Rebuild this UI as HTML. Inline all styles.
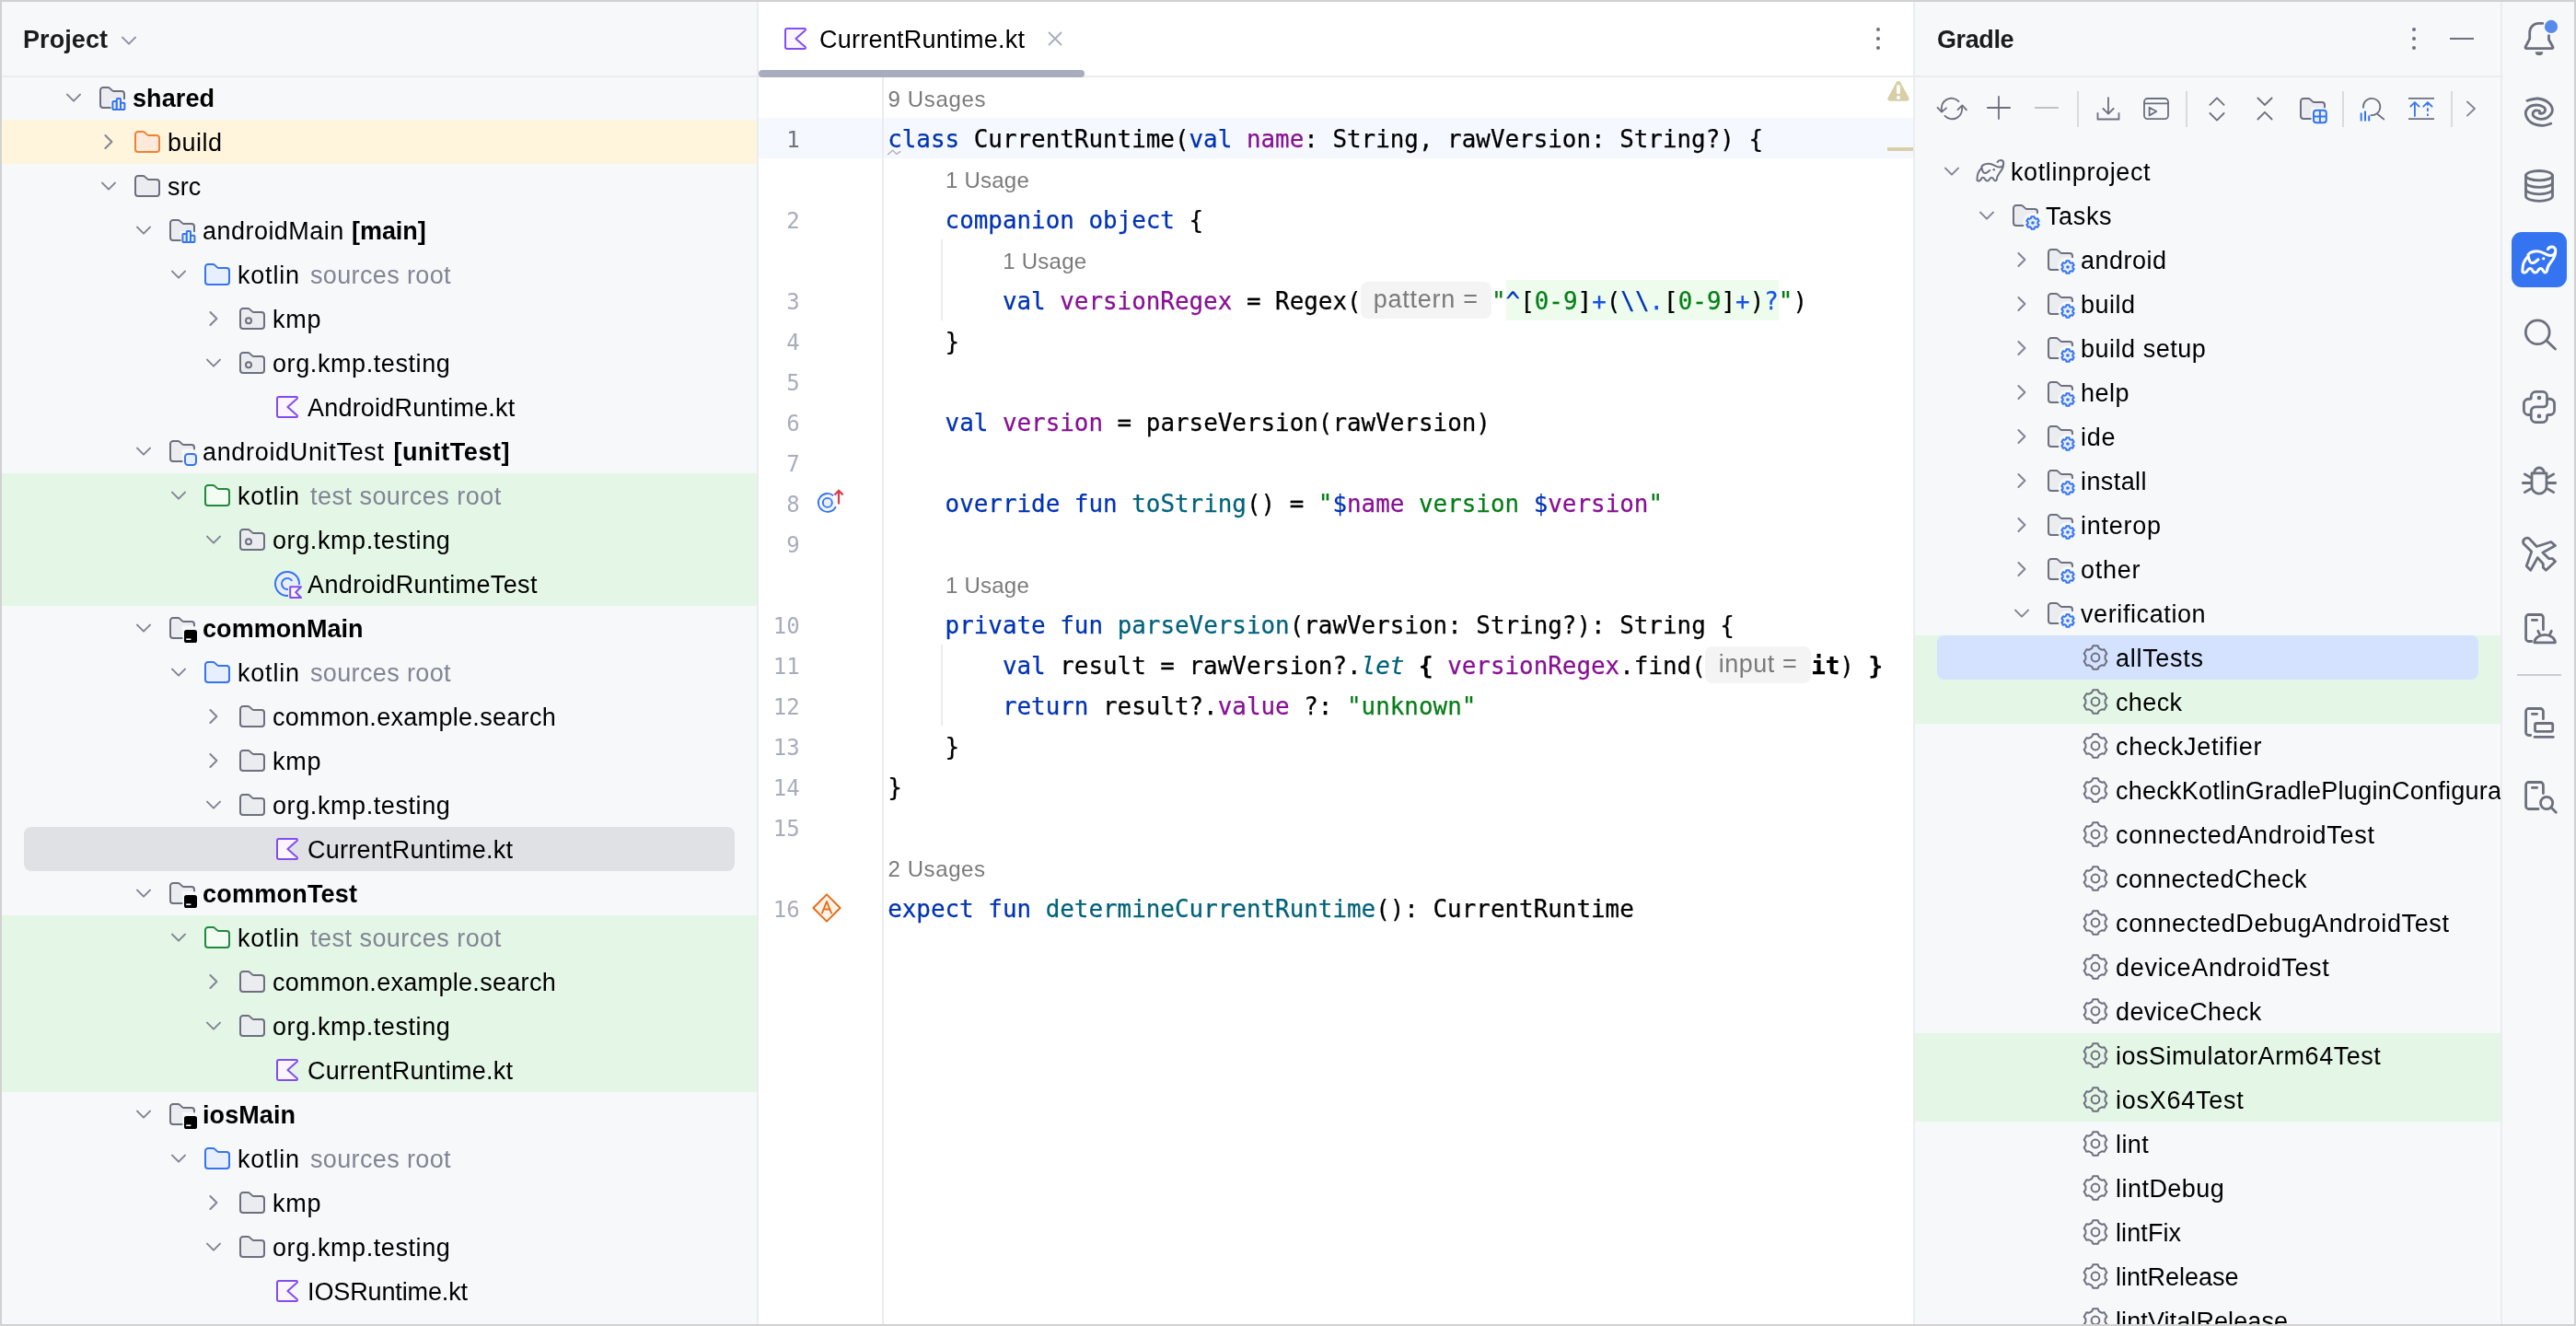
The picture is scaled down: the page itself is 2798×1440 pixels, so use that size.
<!DOCTYPE html>
<html lang="en"><head><meta charset="utf-8"><title>CurrentRuntime.kt</title>
<style>
html,body{margin:0;padding:0}
body{width:2798px;height:1440px;position:relative;overflow:hidden;background:#f7f8fa;
font-family:"Liberation Sans", sans-serif;font-size:27px;color:#000}
.abs{position:absolute}
.t{position:absolute;white-space:pre;display:block}
.b{font-weight:bold}
.g{color:#818594}
.hdr{font-weight:bold;font-size:27px;color:#1c1c1e}
.hint{font-size:24px;color:#7a7a7a}
.code{font-family:"DejaVu Sans Mono", "Liberation Mono", monospace;font-size:25.9px;-webkit-text-stroke:.25px currentColor}
.ln{font-family:"DejaVu Sans Mono", "Liberation Mono", monospace;font-size:24px;color:#a8adbd;text-align:right}
.i{font-style:italic}
.inl{position:absolute;left:-.6px;top:1px;height:40px;line-height:39.6px;right:.4px;text-align:center;background:#f4f4f4;border-radius:8px;
font-family:"Liberation Sans", sans-serif;font-size:27px;color:#7a7a7a;white-space:pre;-webkit-text-stroke:0;font-weight:normal;font-style:normal}
.kw{color:#0033b3}.fn{color:#00627a}.pr{color:#871094}.st{color:#067d17}.rx{color:#1750eb}
</style></head><body><div id="root" style="position:absolute;left:0;top:0;width:2798px;height:1440px;will-change:transform">

<div class="abs" style="left:824px;top:0;width:1254px;height:1440px;background:#fff"></div>
<div class="abs" style="left:2px;top:130px;width:820px;height:48px;background:#fff4dc"></div>
<div class="abs" style="left:2px;top:514px;width:820px;height:144px;background:#e4f6e6"></div>
<div class="abs" style="left:2px;top:994px;width:820px;height:192px;background:#e4f6e6"></div>
<div class="abs" style="left:26px;top:898px;width:772px;height:48px;background:#dfe1e5;border-radius:8px"></div>
<svg style="position:absolute;left:70px;top:96px" width="20" height="20" viewBox="-10 -10 20 20" fill="none"><path d="M-7 -3.4L0 3.6L7 -3.4" stroke="#818594" stroke-width="2" stroke-linecap="round" stroke-linejoin="round"/></svg><svg style="position:absolute;left:106px;top:90px" width="32" height="32" viewBox="0 0 16 16" fill="none" ><path d="M6.9 13.5H3A1.5 1.5 0 0 1 1.5 12V4A1.5 1.5 0 0 1 3 2.5H5.6C6 2.5 6.37 2.66 6.65 2.94L7.85 4.06C8.04 4.25 8.3 4.45 8.56 4.45H13A1.5 1.5 0 0 1 14.5 5.95V8.6H6.9Z" fill="#ebecf0"/><path d="M6.9 13.5H3A1.5 1.5 0 0 1 1.5 12V4A1.5 1.5 0 0 1 3 2.5H5.6C6 2.5 6.37 2.66 6.65 2.94L7.85 4.06C8.04 4.25 8.3 4.45 8.56 4.45H13A1.5 1.5 0 0 1 14.5 5.95V8.6" stroke="#6c707e" stroke-linecap="round"/><rect x="8.2" y="10" width="2.2" height="4.5" rx=".4" fill="#e7effd" stroke="#3574f0"/><rect x="10.4" y="8.5" width="2.1" height="6" rx=".4" fill="#e7effd" stroke="#3574f0"/><rect x="12.5" y="10.9" width="2.2" height="3.6" rx=".4" fill="#e7effd" stroke="#3574f0"/></svg><span class="t b" style="left:144px;top:83px;height:48px;line-height:48px;letter-spacing:0.090px;">shared</span>
<svg style="position:absolute;left:107.5px;top:144px" width="20" height="20" viewBox="-10 -10 20 20" fill="none"><path d="M-3.6 -7L3.4 0L-3.6 7" stroke="#818594" stroke-width="2" stroke-linecap="round" stroke-linejoin="round"/></svg><svg style="position:absolute;left:144px;top:138px" width="32" height="32" viewBox="0 0 16 16" fill="none" ><path d="M1.5 4A1.5 1.5 0 0 1 3 2.5H5.6C6 2.5 6.37 2.66 6.65 2.94L7.85 4.06C8.04 4.25 8.3 4.45 8.56 4.45H13A1.5 1.5 0 0 1 14.5 5.95V12A1.5 1.5 0 0 1 13 13.5H3A1.5 1.5 0 0 1 1.5 12Z" fill="#ffe9db" stroke="#ee8232"/></svg><span class="t " style="left:182px;top:131px;height:48px;line-height:48px;letter-spacing:0.493px;">build</span>
<svg style="position:absolute;left:108px;top:192px" width="20" height="20" viewBox="-10 -10 20 20" fill="none"><path d="M-7 -3.4L0 3.6L7 -3.4" stroke="#818594" stroke-width="2" stroke-linecap="round" stroke-linejoin="round"/></svg><svg style="position:absolute;left:144px;top:186px" width="32" height="32" viewBox="0 0 16 16" fill="none" ><path d="M1.5 4A1.5 1.5 0 0 1 3 2.5H5.6C6 2.5 6.37 2.66 6.65 2.94L7.85 4.06C8.04 4.25 8.3 4.45 8.56 4.45H13A1.5 1.5 0 0 1 14.5 5.95V12A1.5 1.5 0 0 1 13 13.5H3A1.5 1.5 0 0 1 1.5 12Z" fill="#ebecf0" stroke="#6c707e"/></svg><span class="t " style="left:182px;top:179px;height:48px;line-height:48px;letter-spacing:0.129px;">src</span>
<svg style="position:absolute;left:146px;top:240px" width="20" height="20" viewBox="-10 -10 20 20" fill="none"><path d="M-7 -3.4L0 3.6L7 -3.4" stroke="#818594" stroke-width="2" stroke-linecap="round" stroke-linejoin="round"/></svg><svg style="position:absolute;left:182px;top:234px" width="32" height="32" viewBox="0 0 16 16" fill="none" ><path d="M6.9 13.5H3A1.5 1.5 0 0 1 1.5 12V4A1.5 1.5 0 0 1 3 2.5H5.6C6 2.5 6.37 2.66 6.65 2.94L7.85 4.06C8.04 4.25 8.3 4.45 8.56 4.45H13A1.5 1.5 0 0 1 14.5 5.95V8.6H6.9Z" fill="#ebecf0"/><path d="M6.9 13.5H3A1.5 1.5 0 0 1 1.5 12V4A1.5 1.5 0 0 1 3 2.5H5.6C6 2.5 6.37 2.66 6.65 2.94L7.85 4.06C8.04 4.25 8.3 4.45 8.56 4.45H13A1.5 1.5 0 0 1 14.5 5.95V8.6" stroke="#6c707e" stroke-linecap="round"/><rect x="8.2" y="10" width="2.2" height="4.5" rx=".4" fill="#e7effd" stroke="#3574f0"/><rect x="10.4" y="8.5" width="2.1" height="6" rx=".4" fill="#e7effd" stroke="#3574f0"/><rect x="12.5" y="10.9" width="2.2" height="3.6" rx=".4" fill="#e7effd" stroke="#3574f0"/></svg><span class="t " style="left:220px;top:227px;height:48px;line-height:48px;letter-spacing:0.467px;">androidMain</span><span class="t b" style="left:382px;top:227px;height:48px;line-height:48px;letter-spacing:-0.052px;">[main]</span>
<svg style="position:absolute;left:184px;top:288px" width="20" height="20" viewBox="-10 -10 20 20" fill="none"><path d="M-7 -3.4L0 3.6L7 -3.4" stroke="#818594" stroke-width="2" stroke-linecap="round" stroke-linejoin="round"/></svg><svg style="position:absolute;left:220px;top:282px" width="32" height="32" viewBox="0 0 16 16" fill="none" ><path d="M1.5 4A1.5 1.5 0 0 1 3 2.5H5.6C6 2.5 6.37 2.66 6.65 2.94L7.85 4.06C8.04 4.25 8.3 4.45 8.56 4.45H13A1.5 1.5 0 0 1 14.5 5.95V12A1.5 1.5 0 0 1 13 13.5H3A1.5 1.5 0 0 1 1.5 12Z" fill="#e7effd" stroke="#3574f0"/></svg><span class="t " style="left:258px;top:275px;height:48px;line-height:48px;letter-spacing:0.797px;">kotlin</span><span class="t g" style="left:337px;top:275px;height:48px;line-height:48px;letter-spacing:0.358px;">sources root</span>
<svg style="position:absolute;left:221.5px;top:336px" width="20" height="20" viewBox="-10 -10 20 20" fill="none"><path d="M-3.6 -7L3.4 0L-3.6 7" stroke="#818594" stroke-width="2" stroke-linecap="round" stroke-linejoin="round"/></svg><svg style="position:absolute;left:258px;top:330px" width="32" height="32" viewBox="0 0 16 16" fill="none" ><path d="M1.5 4A1.5 1.5 0 0 1 3 2.5H5.6C6 2.5 6.37 2.66 6.65 2.94L7.85 4.06C8.04 4.25 8.3 4.45 8.56 4.45H13A1.5 1.5 0 0 1 14.5 5.95V12A1.5 1.5 0 0 1 13 13.5H3A1.5 1.5 0 0 1 1.5 12Z" fill="#ebecf0" stroke="#6c707e"/><circle cx="6" cy="9.1" r="1.5" stroke="#6c707e" fill="none"/></svg><span class="t " style="left:296px;top:323px;height:48px;line-height:48px;letter-spacing:0.754px;">kmp</span>
<svg style="position:absolute;left:222px;top:384px" width="20" height="20" viewBox="-10 -10 20 20" fill="none"><path d="M-7 -3.4L0 3.6L7 -3.4" stroke="#818594" stroke-width="2" stroke-linecap="round" stroke-linejoin="round"/></svg><svg style="position:absolute;left:258px;top:378px" width="32" height="32" viewBox="0 0 16 16" fill="none" ><path d="M1.5 4A1.5 1.5 0 0 1 3 2.5H5.6C6 2.5 6.37 2.66 6.65 2.94L7.85 4.06C8.04 4.25 8.3 4.45 8.56 4.45H13A1.5 1.5 0 0 1 14.5 5.95V12A1.5 1.5 0 0 1 13 13.5H3A1.5 1.5 0 0 1 1.5 12Z" fill="#ebecf0" stroke="#6c707e"/><circle cx="6" cy="9.1" r="1.5" stroke="#6c707e" fill="none"/></svg><span class="t " style="left:296px;top:371px;height:48px;line-height:48px;letter-spacing:0.588px;">org.kmp.testing</span>
<svg style="position:absolute;left:296px;top:426px" width="32" height="32" viewBox="0 0 16 16" fill="none" ><path d="M3.5 2.5H12.9a.6.6 0 0 1 .42 1.02L8.2 8l5.12 4.48a.6.6 0 0 1-.42 1.02H3.5a1 1 0 0 1-1-1v-9a1 1 0 0 1 1-1z" fill="#faf5ff" stroke="#834df0" stroke-linejoin="round"/></svg><span class="t " style="left:334px;top:419px;height:48px;line-height:48px;letter-spacing:0.197px;">AndroidRuntime.kt</span>
<svg style="position:absolute;left:146px;top:480px" width="20" height="20" viewBox="-10 -10 20 20" fill="none"><path d="M-7 -3.4L0 3.6L7 -3.4" stroke="#818594" stroke-width="2" stroke-linecap="round" stroke-linejoin="round"/></svg><svg style="position:absolute;left:182px;top:474px" width="32" height="32" viewBox="0 0 16 16" fill="none" ><path d="M7.8 13.5H3A1.5 1.5 0 0 1 1.5 12V4A1.5 1.5 0 0 1 3 2.5H5.6C6 2.5 6.37 2.66 6.65 2.94L7.85 4.06C8.04 4.25 8.3 4.45 8.56 4.45H13A1.5 1.5 0 0 1 14.5 5.95V6.8H7.8Z" fill="#ebecf0"/><path d="M7.8 13.5H3A1.5 1.5 0 0 1 1.5 12V4A1.5 1.5 0 0 1 3 2.5H5.6C6 2.5 6.37 2.66 6.65 2.94L7.85 4.06C8.04 4.25 8.3 4.45 8.56 4.45H13A1.5 1.5 0 0 1 14.5 5.95V6.8" stroke="#6c707e" stroke-linecap="round"/><rect x="9.5" y="9.5" width="6" height="6" rx="1.6" fill="#e7effd" stroke="#3574f0"/></svg><span class="t " style="left:220px;top:467px;height:48px;line-height:48px;letter-spacing:0.671px;">androidUnitTest</span><span class="t b" style="left:427.5px;top:467px;height:48px;line-height:48px;letter-spacing:0.558px;">[unitTest]</span>
<svg style="position:absolute;left:184px;top:528px" width="20" height="20" viewBox="-10 -10 20 20" fill="none"><path d="M-7 -3.4L0 3.6L7 -3.4" stroke="#818594" stroke-width="2" stroke-linecap="round" stroke-linejoin="round"/></svg><svg style="position:absolute;left:220px;top:522px" width="32" height="32" viewBox="0 0 16 16" fill="none" ><path d="M1.5 4A1.5 1.5 0 0 1 3 2.5H5.6C6 2.5 6.37 2.66 6.65 2.94L7.85 4.06C8.04 4.25 8.3 4.45 8.56 4.45H13A1.5 1.5 0 0 1 14.5 5.95V12A1.5 1.5 0 0 1 13 13.5H3A1.5 1.5 0 0 1 1.5 12Z" fill="#f2fcf3" stroke="#208a3c"/></svg><span class="t " style="left:258px;top:515px;height:48px;line-height:48px;letter-spacing:0.797px;">kotlin</span><span class="t g" style="left:337px;top:515px;height:48px;line-height:48px;letter-spacing:0.476px;">test sources root</span>
<svg style="position:absolute;left:222px;top:576px" width="20" height="20" viewBox="-10 -10 20 20" fill="none"><path d="M-7 -3.4L0 3.6L7 -3.4" stroke="#818594" stroke-width="2" stroke-linecap="round" stroke-linejoin="round"/></svg><svg style="position:absolute;left:258px;top:570px" width="32" height="32" viewBox="0 0 16 16" fill="none" ><path d="M1.5 4A1.5 1.5 0 0 1 3 2.5H5.6C6 2.5 6.37 2.66 6.65 2.94L7.85 4.06C8.04 4.25 8.3 4.45 8.56 4.45H13A1.5 1.5 0 0 1 14.5 5.95V12A1.5 1.5 0 0 1 13 13.5H3A1.5 1.5 0 0 1 1.5 12Z" fill="#ebecf0" stroke="#6c707e"/><circle cx="6" cy="9.1" r="1.5" stroke="#6c707e" fill="none"/></svg><span class="t " style="left:296px;top:563px;height:48px;line-height:48px;letter-spacing:0.588px;">org.kmp.testing</span>
<svg style="position:absolute;left:296px;top:618px" width="32" height="32" viewBox="0 0 16 16" fill="none" ><circle cx="8" cy="8" r="6.5" fill="#e7effd" stroke="#3574f0"/><path d="M10.6 6.4A3 3 0 1 0 9 10.8" stroke="#3574f0" fill="none"/><rect x="8.5" y="8.5" width="8" height="8" fill="#e4f6e6"/><path d="M9.6 9.6H15.5L12.6 12.6L15.5 15.5H9.6Z" fill="#faf5ff" stroke="#834df0" stroke-linejoin="round"/></svg><span class="t " style="left:334px;top:611px;height:48px;line-height:48px;letter-spacing:0.375px;">AndroidRuntimeTest</span>
<svg style="position:absolute;left:146px;top:672px" width="20" height="20" viewBox="-10 -10 20 20" fill="none"><path d="M-7 -3.4L0 3.6L7 -3.4" stroke="#818594" stroke-width="2" stroke-linecap="round" stroke-linejoin="round"/></svg><svg style="position:absolute;left:182px;top:666px" width="32" height="32" viewBox="0 0 16 16" fill="none" ><path d="M7.8 13.5H3A1.5 1.5 0 0 1 1.5 12V4A1.5 1.5 0 0 1 3 2.5H5.6C6 2.5 6.37 2.66 6.65 2.94L7.85 4.06C8.04 4.25 8.3 4.45 8.56 4.45H13A1.5 1.5 0 0 1 14.5 5.95V6.8H7.8Z" fill="#ebecf0"/><path d="M7.8 13.5H3A1.5 1.5 0 0 1 1.5 12V4A1.5 1.5 0 0 1 3 2.5H5.6C6 2.5 6.37 2.66 6.65 2.94L7.85 4.06C8.04 4.25 8.3 4.45 8.56 4.45H13A1.5 1.5 0 0 1 14.5 5.95V6.8" stroke="#6c707e" stroke-linecap="round"/><rect x="9" y="9" width="7" height="7" rx="1.3" fill="#000"/><rect x="10.1" y="13.7" width="2.6" height=".8" fill="#fff"/></svg><span class="t b" style="left:220px;top:659px;height:48px;line-height:48px;letter-spacing:0.065px;">commonMain</span>
<svg style="position:absolute;left:184px;top:720px" width="20" height="20" viewBox="-10 -10 20 20" fill="none"><path d="M-7 -3.4L0 3.6L7 -3.4" stroke="#818594" stroke-width="2" stroke-linecap="round" stroke-linejoin="round"/></svg><svg style="position:absolute;left:220px;top:714px" width="32" height="32" viewBox="0 0 16 16" fill="none" ><path d="M1.5 4A1.5 1.5 0 0 1 3 2.5H5.6C6 2.5 6.37 2.66 6.65 2.94L7.85 4.06C8.04 4.25 8.3 4.45 8.56 4.45H13A1.5 1.5 0 0 1 14.5 5.95V12A1.5 1.5 0 0 1 13 13.5H3A1.5 1.5 0 0 1 1.5 12Z" fill="#e7effd" stroke="#3574f0"/></svg><span class="t " style="left:258px;top:707px;height:48px;line-height:48px;letter-spacing:0.797px;">kotlin</span><span class="t g" style="left:337px;top:707px;height:48px;line-height:48px;letter-spacing:0.358px;">sources root</span>
<svg style="position:absolute;left:221.5px;top:768px" width="20" height="20" viewBox="-10 -10 20 20" fill="none"><path d="M-3.6 -7L3.4 0L-3.6 7" stroke="#818594" stroke-width="2" stroke-linecap="round" stroke-linejoin="round"/></svg><svg style="position:absolute;left:258px;top:762px" width="32" height="32" viewBox="0 0 16 16" fill="none" ><path d="M1.5 4A1.5 1.5 0 0 1 3 2.5H5.6C6 2.5 6.37 2.66 6.65 2.94L7.85 4.06C8.04 4.25 8.3 4.45 8.56 4.45H13A1.5 1.5 0 0 1 14.5 5.95V12A1.5 1.5 0 0 1 13 13.5H3A1.5 1.5 0 0 1 1.5 12Z" fill="#ebecf0" stroke="#6c707e"/></svg><span class="t " style="left:296px;top:755px;height:48px;line-height:48px;letter-spacing:0.304px;">common.example.search</span>
<svg style="position:absolute;left:221.5px;top:816px" width="20" height="20" viewBox="-10 -10 20 20" fill="none"><path d="M-3.6 -7L3.4 0L-3.6 7" stroke="#818594" stroke-width="2" stroke-linecap="round" stroke-linejoin="round"/></svg><svg style="position:absolute;left:258px;top:810px" width="32" height="32" viewBox="0 0 16 16" fill="none" ><path d="M1.5 4A1.5 1.5 0 0 1 3 2.5H5.6C6 2.5 6.37 2.66 6.65 2.94L7.85 4.06C8.04 4.25 8.3 4.45 8.56 4.45H13A1.5 1.5 0 0 1 14.5 5.95V12A1.5 1.5 0 0 1 13 13.5H3A1.5 1.5 0 0 1 1.5 12Z" fill="#ebecf0" stroke="#6c707e"/></svg><span class="t " style="left:296px;top:803px;height:48px;line-height:48px;letter-spacing:0.754px;">kmp</span>
<svg style="position:absolute;left:222px;top:864px" width="20" height="20" viewBox="-10 -10 20 20" fill="none"><path d="M-7 -3.4L0 3.6L7 -3.4" stroke="#818594" stroke-width="2" stroke-linecap="round" stroke-linejoin="round"/></svg><svg style="position:absolute;left:258px;top:858px" width="32" height="32" viewBox="0 0 16 16" fill="none" ><path d="M1.5 4A1.5 1.5 0 0 1 3 2.5H5.6C6 2.5 6.37 2.66 6.65 2.94L7.85 4.06C8.04 4.25 8.3 4.45 8.56 4.45H13A1.5 1.5 0 0 1 14.5 5.95V12A1.5 1.5 0 0 1 13 13.5H3A1.5 1.5 0 0 1 1.5 12Z" fill="#ebecf0" stroke="#6c707e"/></svg><span class="t " style="left:296px;top:851px;height:48px;line-height:48px;letter-spacing:0.588px;">org.kmp.testing</span>
<svg style="position:absolute;left:296px;top:906px" width="32" height="32" viewBox="0 0 16 16" fill="none" ><path d="M3.5 2.5H12.9a.6.6 0 0 1 .42 1.02L8.2 8l5.12 4.48a.6.6 0 0 1-.42 1.02H3.5a1 1 0 0 1-1-1v-9a1 1 0 0 1 1-1z" fill="#faf5ff" stroke="#834df0" stroke-linejoin="round"/></svg><span class="t " style="left:334px;top:899px;height:48px;line-height:48px;letter-spacing:0.239px;">CurrentRuntime.kt</span>
<svg style="position:absolute;left:146px;top:960px" width="20" height="20" viewBox="-10 -10 20 20" fill="none"><path d="M-7 -3.4L0 3.6L7 -3.4" stroke="#818594" stroke-width="2" stroke-linecap="round" stroke-linejoin="round"/></svg><svg style="position:absolute;left:182px;top:954px" width="32" height="32" viewBox="0 0 16 16" fill="none" ><path d="M7.8 13.5H3A1.5 1.5 0 0 1 1.5 12V4A1.5 1.5 0 0 1 3 2.5H5.6C6 2.5 6.37 2.66 6.65 2.94L7.85 4.06C8.04 4.25 8.3 4.45 8.56 4.45H13A1.5 1.5 0 0 1 14.5 5.95V6.8H7.8Z" fill="#ebecf0"/><path d="M7.8 13.5H3A1.5 1.5 0 0 1 1.5 12V4A1.5 1.5 0 0 1 3 2.5H5.6C6 2.5 6.37 2.66 6.65 2.94L7.85 4.06C8.04 4.25 8.3 4.45 8.56 4.45H13A1.5 1.5 0 0 1 14.5 5.95V6.8" stroke="#6c707e" stroke-linecap="round"/><rect x="9" y="9" width="7" height="7" rx="1.3" fill="#000"/><rect x="10.1" y="13.7" width="2.6" height=".8" fill="#fff"/></svg><span class="t b" style="left:220px;top:947px;height:48px;line-height:48px;letter-spacing:0.230px;">commonTest</span>
<svg style="position:absolute;left:184px;top:1008px" width="20" height="20" viewBox="-10 -10 20 20" fill="none"><path d="M-7 -3.4L0 3.6L7 -3.4" stroke="#818594" stroke-width="2" stroke-linecap="round" stroke-linejoin="round"/></svg><svg style="position:absolute;left:220px;top:1002px" width="32" height="32" viewBox="0 0 16 16" fill="none" ><path d="M1.5 4A1.5 1.5 0 0 1 3 2.5H5.6C6 2.5 6.37 2.66 6.65 2.94L7.85 4.06C8.04 4.25 8.3 4.45 8.56 4.45H13A1.5 1.5 0 0 1 14.5 5.95V12A1.5 1.5 0 0 1 13 13.5H3A1.5 1.5 0 0 1 1.5 12Z" fill="#f2fcf3" stroke="#208a3c"/></svg><span class="t " style="left:258px;top:995px;height:48px;line-height:48px;letter-spacing:0.797px;">kotlin</span><span class="t g" style="left:337px;top:995px;height:48px;line-height:48px;letter-spacing:0.476px;">test sources root</span>
<svg style="position:absolute;left:221.5px;top:1056px" width="20" height="20" viewBox="-10 -10 20 20" fill="none"><path d="M-3.6 -7L3.4 0L-3.6 7" stroke="#818594" stroke-width="2" stroke-linecap="round" stroke-linejoin="round"/></svg><svg style="position:absolute;left:258px;top:1050px" width="32" height="32" viewBox="0 0 16 16" fill="none" ><path d="M1.5 4A1.5 1.5 0 0 1 3 2.5H5.6C6 2.5 6.37 2.66 6.65 2.94L7.85 4.06C8.04 4.25 8.3 4.45 8.56 4.45H13A1.5 1.5 0 0 1 14.5 5.95V12A1.5 1.5 0 0 1 13 13.5H3A1.5 1.5 0 0 1 1.5 12Z" fill="#ebecf0" stroke="#6c707e"/></svg><span class="t " style="left:296px;top:1043px;height:48px;line-height:48px;letter-spacing:0.304px;">common.example.search</span>
<svg style="position:absolute;left:222px;top:1104px" width="20" height="20" viewBox="-10 -10 20 20" fill="none"><path d="M-7 -3.4L0 3.6L7 -3.4" stroke="#818594" stroke-width="2" stroke-linecap="round" stroke-linejoin="round"/></svg><svg style="position:absolute;left:258px;top:1098px" width="32" height="32" viewBox="0 0 16 16" fill="none" ><path d="M1.5 4A1.5 1.5 0 0 1 3 2.5H5.6C6 2.5 6.37 2.66 6.65 2.94L7.85 4.06C8.04 4.25 8.3 4.45 8.56 4.45H13A1.5 1.5 0 0 1 14.5 5.95V12A1.5 1.5 0 0 1 13 13.5H3A1.5 1.5 0 0 1 1.5 12Z" fill="#ebecf0" stroke="#6c707e"/></svg><span class="t " style="left:296px;top:1091px;height:48px;line-height:48px;letter-spacing:0.588px;">org.kmp.testing</span>
<svg style="position:absolute;left:296px;top:1146px" width="32" height="32" viewBox="0 0 16 16" fill="none" ><path d="M3.5 2.5H12.9a.6.6 0 0 1 .42 1.02L8.2 8l5.12 4.48a.6.6 0 0 1-.42 1.02H3.5a1 1 0 0 1-1-1v-9a1 1 0 0 1 1-1z" fill="#faf5ff" stroke="#834df0" stroke-linejoin="round"/></svg><span class="t " style="left:334px;top:1139px;height:48px;line-height:48px;letter-spacing:0.239px;">CurrentRuntime.kt</span>
<svg style="position:absolute;left:146px;top:1200px" width="20" height="20" viewBox="-10 -10 20 20" fill="none"><path d="M-7 -3.4L0 3.6L7 -3.4" stroke="#818594" stroke-width="2" stroke-linecap="round" stroke-linejoin="round"/></svg><svg style="position:absolute;left:182px;top:1194px" width="32" height="32" viewBox="0 0 16 16" fill="none" ><path d="M7.8 13.5H3A1.5 1.5 0 0 1 1.5 12V4A1.5 1.5 0 0 1 3 2.5H5.6C6 2.5 6.37 2.66 6.65 2.94L7.85 4.06C8.04 4.25 8.3 4.45 8.56 4.45H13A1.5 1.5 0 0 1 14.5 5.95V6.8H7.8Z" fill="#ebecf0"/><path d="M7.8 13.5H3A1.5 1.5 0 0 1 1.5 12V4A1.5 1.5 0 0 1 3 2.5H5.6C6 2.5 6.37 2.66 6.65 2.94L7.85 4.06C8.04 4.25 8.3 4.45 8.56 4.45H13A1.5 1.5 0 0 1 14.5 5.95V6.8" stroke="#6c707e" stroke-linecap="round"/><rect x="9" y="9" width="7" height="7" rx="1.3" fill="#000"/><rect x="10.1" y="13.7" width="2.6" height=".8" fill="#fff"/></svg><span class="t b" style="left:220px;top:1187px;height:48px;line-height:48px;letter-spacing:0.080px;">iosMain</span>
<svg style="position:absolute;left:184px;top:1248px" width="20" height="20" viewBox="-10 -10 20 20" fill="none"><path d="M-7 -3.4L0 3.6L7 -3.4" stroke="#818594" stroke-width="2" stroke-linecap="round" stroke-linejoin="round"/></svg><svg style="position:absolute;left:220px;top:1242px" width="32" height="32" viewBox="0 0 16 16" fill="none" ><path d="M1.5 4A1.5 1.5 0 0 1 3 2.5H5.6C6 2.5 6.37 2.66 6.65 2.94L7.85 4.06C8.04 4.25 8.3 4.45 8.56 4.45H13A1.5 1.5 0 0 1 14.5 5.95V12A1.5 1.5 0 0 1 13 13.5H3A1.5 1.5 0 0 1 1.5 12Z" fill="#e7effd" stroke="#3574f0"/></svg><span class="t " style="left:258px;top:1235px;height:48px;line-height:48px;letter-spacing:0.797px;">kotlin</span><span class="t g" style="left:337px;top:1235px;height:48px;line-height:48px;letter-spacing:0.358px;">sources root</span>
<svg style="position:absolute;left:221.5px;top:1296px" width="20" height="20" viewBox="-10 -10 20 20" fill="none"><path d="M-3.6 -7L3.4 0L-3.6 7" stroke="#818594" stroke-width="2" stroke-linecap="round" stroke-linejoin="round"/></svg><svg style="position:absolute;left:258px;top:1290px" width="32" height="32" viewBox="0 0 16 16" fill="none" ><path d="M1.5 4A1.5 1.5 0 0 1 3 2.5H5.6C6 2.5 6.37 2.66 6.65 2.94L7.85 4.06C8.04 4.25 8.3 4.45 8.56 4.45H13A1.5 1.5 0 0 1 14.5 5.95V12A1.5 1.5 0 0 1 13 13.5H3A1.5 1.5 0 0 1 1.5 12Z" fill="#ebecf0" stroke="#6c707e"/></svg><span class="t " style="left:296px;top:1283px;height:48px;line-height:48px;letter-spacing:0.754px;">kmp</span>
<svg style="position:absolute;left:222px;top:1344px" width="20" height="20" viewBox="-10 -10 20 20" fill="none"><path d="M-7 -3.4L0 3.6L7 -3.4" stroke="#818594" stroke-width="2" stroke-linecap="round" stroke-linejoin="round"/></svg><svg style="position:absolute;left:258px;top:1338px" width="32" height="32" viewBox="0 0 16 16" fill="none" ><path d="M1.5 4A1.5 1.5 0 0 1 3 2.5H5.6C6 2.5 6.37 2.66 6.65 2.94L7.85 4.06C8.04 4.25 8.3 4.45 8.56 4.45H13A1.5 1.5 0 0 1 14.5 5.95V12A1.5 1.5 0 0 1 13 13.5H3A1.5 1.5 0 0 1 1.5 12Z" fill="#ebecf0" stroke="#6c707e"/></svg><span class="t " style="left:296px;top:1331px;height:48px;line-height:48px;letter-spacing:0.588px;">org.kmp.testing</span>
<svg style="position:absolute;left:296px;top:1386px" width="32" height="32" viewBox="0 0 16 16" fill="none" ><path d="M3.5 2.5H12.9a.6.6 0 0 1 .42 1.02L8.2 8l5.12 4.48a.6.6 0 0 1-.42 1.02H3.5a1 1 0 0 1-1-1v-9a1 1 0 0 1 1-1z" fill="#faf5ff" stroke="#834df0" stroke-linejoin="round"/></svg><span class="t " style="left:334px;top:1379px;height:48px;line-height:48px;letter-spacing:-0.121px;">IOSRuntime.kt</span>
<div class="abs" style="left:2px;top:0;width:820px;height:82px;background:#f7f8fa"></div>
<span class="t hdr" style="left:25px;top:1px;height:84px;line-height:84px;letter-spacing:0.076px;">Project</span>
<svg style="position:absolute;left:130px;top:34.3px" width="20" height="20" viewBox="-10 -10 20 20" fill="none"><path d="M-7 -3.4L0 3.6L7 -3.4" stroke="#8a8fa3" stroke-width="2" stroke-linecap="round" stroke-linejoin="round"/></svg>
<div class="abs" style="left:824px;top:128px;width:1254px;height:44px;background:#f5f8fe"></div>
<div class="abs" style="left:958px;top:84px;width:2px;height:1356px;background:#ebecf0"></div>
<div class="abs" style="left:1022px;top:260px;width:2px;height:88px;background:#ebecf0"></div>
<div class="abs" style="left:1022px;top:700px;width:2px;height:88px;background:#ebecf0"></div>
<svg style="position:absolute;left:848px;top:26px" width="32" height="32" viewBox="0 0 16 16" fill="none" ><path d="M3.5 2.5H12.9a.6.6 0 0 1 .42 1.02L8.2 8l5.12 4.48a.6.6 0 0 1-.42 1.02H3.5a1 1 0 0 1-1-1v-9a1 1 0 0 1 1-1z" fill="#faf5ff" stroke="#834df0" stroke-linejoin="round"/></svg>
<span class="t " style="left:890px;top:1px;height:84px;line-height:84px;letter-spacing:0.239px;">CurrentRuntime.kt</span>
<svg class="abs" style="left:1136px;top:32px" width="20" height="20" viewBox="0 0 20 20" fill="none"><path d="M3.5 3.5L16.5 16.5M16.5 3.5L3.5 16.5" stroke="#a8adbd" stroke-width="1.8" stroke-linecap="round"/></svg>
<div class="abs" style="left:2038px;top:30px;width:4px;height:4px;border-radius:50%;background:#6c707e"></div><div class="abs" style="left:2038px;top:40px;width:4px;height:4px;border-radius:50%;background:#6c707e"></div><div class="abs" style="left:2038px;top:50px;width:4px;height:4px;border-radius:50%;background:#6c707e"></div>
<svg class="abs" style="left:2049px;top:87px" width="26" height="24" viewBox="0 0 26 24"><path d="M10.7 2.3a2.6 2.6 0 0 1 4.6 0l9 16.6a2.6 2.6 0 0 1-2.3 3.8H4a2.6 2.6 0 0 1-2.3-3.8z" fill="#d8cfa9"/><rect x="11.1" y="5" width="3.8" height="10.2" rx="1.9" fill="#fff"/><circle cx="13" cy="19" r="2" fill="#fff"/></svg>
<div class="abs" style="left:2050px;top:160px;width:28px;height:4px;background:#d9cfa9"></div>
<span class="t hint" style="left:964.5px;top:85px;height:44px;line-height:44px;letter-spacing:0.658px;padding-top:1px;">9 Usages</span>
<span class="t ln" style="left:824px;top:129.5px;width:44.7px;height:44px;line-height:44px;color:#6e7282">1</span>
<span class="t code" style="left:964.2px;top:129px;height:44px;line-height:44px"><span class="kw">class</span> CurrentRuntime(<span class="kw">val</span> <span class="pr">name</span>: String, rawVersion: String?) {</span>
<span class="t hint" style="left:1026.9px;top:173px;height:44px;line-height:44px;letter-spacing:0.243px;padding-top:1px;">1 Usage</span>
<span class="t ln" style="left:824px;top:217.5px;width:44.7px;height:44px;line-height:44px;color:#a8adbd">2</span>
<span class="t code" style="left:964.2px;top:217px;height:44px;line-height:44px">    <span class="kw">companion</span> <span class="kw">object</span> {</span>
<span class="t hint" style="left:1089.3px;top:261px;height:44px;line-height:44px;letter-spacing:0.243px;padding-top:1px;">1 Usage</span>
<span class="t ln" style="left:824px;top:305.5px;width:44.7px;height:44px;line-height:44px;color:#a8adbd">3</span>
<span class="t code" style="left:964.2px;top:305px;height:44px;line-height:44px">        <span class="kw">val</span> <span class="pr">versionRegex</span> = Regex(<span style="display:inline-block;width:141.4px;height:44px;vertical-align:top;position:relative"><span class="inl" style="letter-spacing:0.742px;">pattern =</span></span><span class="st">"</span><span style="background:#edfced;display:inline-block;height:44px;vertical-align:top;margin-top:-1px;padding-top:1px;box-sizing:border-box"><span class="kw">^</span><span class="">[</span><span class="st">0-9</span><span class="">]</span><span class="rx">+</span><span class="">(</span><span class="kw">\\</span><span class="rx">.</span><span class="">[</span><span class="st">0-9</span><span class="">]</span><span class="rx">+</span><span class="">)</span><span class="rx">?</span></span><span class="st">"</span>)</span>
<span class="t ln" style="left:824px;top:349.5px;width:44.7px;height:44px;line-height:44px;color:#a8adbd">4</span>
<span class="t code" style="left:964.2px;top:349px;height:44px;line-height:44px">    }</span>
<span class="t ln" style="left:824px;top:393.5px;width:44.7px;height:44px;line-height:44px;color:#a8adbd">5</span>
<span class="t ln" style="left:824px;top:437.5px;width:44.7px;height:44px;line-height:44px;color:#a8adbd">6</span>
<span class="t code" style="left:964.2px;top:437px;height:44px;line-height:44px">    <span class="kw">val</span> <span class="pr">version</span> = parseVersion(rawVersion)</span>
<span class="t ln" style="left:824px;top:481.5px;width:44.7px;height:44px;line-height:44px;color:#a8adbd">7</span>
<span class="t ln" style="left:824px;top:525.5px;width:44.7px;height:44px;line-height:44px;color:#a8adbd">8</span>
<span class="t code" style="left:964.2px;top:525px;height:44px;line-height:44px">    <span class="kw">override</span> <span class="kw">fun</span> <span class="fn">toString</span>() = <span class="st">"</span><span class="kw">$</span><span class="pr">name</span><span class="st"> version </span><span class="kw">$</span><span class="pr">version</span><span class="st">"</span></span>
<span class="t ln" style="left:824px;top:569.5px;width:44.7px;height:44px;line-height:44px;color:#a8adbd">9</span>
<span class="t hint" style="left:1026.9px;top:613px;height:44px;line-height:44px;letter-spacing:0.243px;padding-top:1px;">1 Usage</span>
<span class="t ln" style="left:824px;top:657.5px;width:44.7px;height:44px;line-height:44px;color:#a8adbd">10</span>
<span class="t code" style="left:964.2px;top:657px;height:44px;line-height:44px">    <span class="kw">private</span> <span class="kw">fun</span> <span class="fn">parseVersion</span>(rawVersion: String?): String {</span>
<span class="t ln" style="left:824px;top:701.5px;width:44.7px;height:44px;line-height:44px;color:#a8adbd">11</span>
<span class="t code" style="left:964.2px;top:701px;height:44px;line-height:44px">        <span class="kw">val</span> result = rawVersion?.<span class="fn i">let</span> <span class="b">{</span> <span class="pr">versionRegex</span>.find(<span style="display:inline-block;width:114.4px;height:44px;vertical-align:top;position:relative"><span class="inl" style="letter-spacing:0.533px;">input =</span></span><span class="b">it</span>) <span class="b">}</span></span>
<span class="t ln" style="left:824px;top:745.5px;width:44.7px;height:44px;line-height:44px;color:#a8adbd">12</span>
<span class="t code" style="left:964.2px;top:745px;height:44px;line-height:44px">        <span class="kw">return</span> result?.<span class="pr">value</span> ?: <span class="st">"unknown"</span></span>
<span class="t ln" style="left:824px;top:789.5px;width:44.7px;height:44px;line-height:44px;color:#a8adbd">13</span>
<span class="t code" style="left:964.2px;top:789px;height:44px;line-height:44px">    }</span>
<span class="t ln" style="left:824px;top:833.5px;width:44.7px;height:44px;line-height:44px;color:#a8adbd">14</span>
<span class="t code" style="left:964.2px;top:833px;height:44px;line-height:44px">}</span>
<span class="t ln" style="left:824px;top:877.5px;width:44.7px;height:44px;line-height:44px;color:#a8adbd">15</span>
<span class="t hint" style="left:964.5px;top:921px;height:44px;line-height:44px;letter-spacing:0.587px;padding-top:1px;">2 Usages</span>
<span class="t ln" style="left:824px;top:965.5px;width:44.7px;height:44px;line-height:44px;color:#a8adbd">16</span>
<span class="t code" style="left:964.2px;top:965px;height:44px;line-height:44px"><span class="kw">expect</span> <span class="kw">fun</span> <span class="fn">determineCurrentRuntime</span>(): CurrentRuntime</span>
<svg class="abs" style="left:962px;top:160px" width="20" height="12" viewBox="0 0 20 12" fill="none"><path d="M2.5 7.8L7.6 3.2L11.8 7.4L15.8 4.6" stroke="#b0b0b0" stroke-width="1.3" stroke-linecap="round" stroke-linejoin="round"/></svg>
<svg class="abs" style="left:886px;top:530px" width="32" height="32" viewBox="0 0 32 32" fill="none"><circle cx="12.8" cy="15.9" r="9.2" fill="#f3f7fe"/><path d="M21.9 20.1A10 10 0 1 1 19.2 8.2" stroke="#3574f0" stroke-width="1.8"/><circle cx="12.8" cy="15.9" r="5" fill="#e7effd" stroke="#3574f0" stroke-width="1.9"/><path d="M25 17.5V3.6M20.5 7.4L25 2.8L29.6 7.4" stroke="#db3b4b" stroke-width="2.2" stroke-linecap="butt" stroke-linejoin="miter"/></svg>
<svg class="abs" style="left:880px;top:968px" width="36" height="36" viewBox="0 0 36 36" fill="none"><path d="M18 3.4L32.6 18L18 32.6L3.4 18Z" fill="#fff4eb" stroke="#e66d17" stroke-width="2" stroke-linejoin="round"/><path d="M13 23.5L18 11L23 23.5M14.8 19.6H21.2" stroke="#e66d17" stroke-width="2" stroke-linecap="round" stroke-linejoin="round"/></svg>
<div class="abs" style="left:2080px;top:0;width:637px;height:1440px;background:#f7f8fa"></div>
<div class="abs" style="left:2080px;top:690px;width:637px;height:96px;background:#e4f6e6"></div>
<div class="abs" style="left:2080px;top:1122px;width:637px;height:96px;background:#e4f6e6"></div>
<div class="abs" style="left:2104px;top:690px;width:588px;height:48px;background:#d4e2ff;border-radius:8px"></div>
<div class="abs" style="left:2080px;top:0;width:635.6px;height:1440px;overflow:hidden">
<svg style="position:absolute;left:30px;top:176px" width="20" height="20" viewBox="-10 -10 20 20" fill="none"><path d="M-7 -3.4L0 3.6L7 -3.4" stroke="#818594" stroke-width="2" stroke-linecap="round" stroke-linejoin="round"/></svg><svg style="position:absolute;left:66px;top:170px" width="32" height="32" viewBox="0 0 16 16" fill="none" ><path d="M0.8 12.9C0.6 10 1.6 7.6 3.2 6.2C3 5 4.5 3.9 7 3.9C9.5 3.9 11 5.8 12.8 5.8C14.2 5.8 15.1 4.8 15.1 3.6C15.1 2.6 14.3 2 13.5 2C12.8 2 12.1 2.4 11.8 3M15.1 3.8C15.1 6.5 13.8 7.8 12.9 8.9C12 10 11.4 11 11.3 12.7M0.8 12.9C1.2 13.4 2.2 13.4 2.7 12.6C3.2 11.8 3.4 11.35 3.9 11.35C4.6 11.35 5 12 5.3 12.6C5.7 13.4 6.8 13.4 7.3 12.6C7.7 11.9 8 11.35 8.6 11.35C9.3 11.35 9.6 12 9.9 12.6C10.2 13.3 11 13.4 11.3 12.7M3.2 5.4C3.3 6.5 3.5 7.6 4 8.4C4.6 9.3 5.6 9.1 6.4 8.5L7.6 7.5" stroke="#6c707e" stroke-width="1" stroke-linecap="round" stroke-linejoin="round" fill="none"/><circle cx="9.9" cy="7.1" r=".65" fill="#6c707e"/></svg><span class="t " style="left:104px;top:163px;height:48px;line-height:48px;letter-spacing:0.619px;">kotlinproject</span>
<svg style="position:absolute;left:68px;top:224px" width="20" height="20" viewBox="-10 -10 20 20" fill="none"><path d="M-7 -3.4L0 3.6L7 -3.4" stroke="#818594" stroke-width="2" stroke-linecap="round" stroke-linejoin="round"/></svg><svg style="position:absolute;left:104px;top:218px" width="32" height="32" viewBox="0 0 16 16" fill="none" ><path d="M1.5 4A1.5 1.5 0 0 1 3 2.5H5.6C6 2.5 6.37 2.66 6.65 2.94L7.85 4.06C8.04 4.25 8.3 4.45 8.56 4.45H13A1.5 1.5 0 0 1 14.5 5.95V12A1.5 1.5 0 0 1 13 13.5H3A1.5 1.5 0 0 1 1.5 12Z" fill="#ebecf0"/><circle cx="12" cy="12" r="5.4" fill="#f7f8fa"/><path d="M6.7 13.5H3A1.5 1.5 0 0 1 1.5 12V4A1.5 1.5 0 0 1 3 2.5H5.6C6 2.5 6.37 2.66 6.65 2.94L7.85 4.06C8.04 4.25 8.3 4.45 8.56 4.45H13A1.5 1.5 0 0 1 14.5 5.95V6.6" stroke="#6c707e" stroke-linecap="round"/><path d="M12.79 8.59L11.21 8.59L11.06 9.42Q10.73 9.79 10.23 9.89L9.44 9.61L8.65 10.98L9.29 11.52Q9.45 12.00 9.29 12.48L8.65 13.02L9.44 14.39L10.23 14.11Q10.72 14.21 11.06 14.58L11.21 15.41L12.79 15.41L12.94 14.58Q13.28 14.21 13.77 14.11L14.56 14.39L15.35 13.02L14.71 12.48Q14.55 12.00 14.71 11.52L15.35 10.98L14.56 9.61L13.77 9.89Q13.27 9.79 12.94 9.42Z" stroke="#3574f0" stroke-width="1" stroke-linejoin="round" fill="#e7effd"/><circle cx="12" cy="12" r=".9" fill="#3574f0"/></svg><span class="t " style="left:142px;top:211px;height:48px;line-height:48px;letter-spacing:0.621px;">Tasks</span>
<svg style="position:absolute;left:105.5px;top:272px" width="20" height="20" viewBox="-10 -10 20 20" fill="none"><path d="M-3.6 -7L3.4 0L-3.6 7" stroke="#818594" stroke-width="2" stroke-linecap="round" stroke-linejoin="round"/></svg><svg style="position:absolute;left:142px;top:266px" width="32" height="32" viewBox="0 0 16 16" fill="none" ><path d="M1.5 4A1.5 1.5 0 0 1 3 2.5H5.6C6 2.5 6.37 2.66 6.65 2.94L7.85 4.06C8.04 4.25 8.3 4.45 8.56 4.45H13A1.5 1.5 0 0 1 14.5 5.95V12A1.5 1.5 0 0 1 13 13.5H3A1.5 1.5 0 0 1 1.5 12Z" fill="#ebecf0"/><circle cx="12" cy="12" r="5.4" fill="#f7f8fa"/><path d="M6.7 13.5H3A1.5 1.5 0 0 1 1.5 12V4A1.5 1.5 0 0 1 3 2.5H5.6C6 2.5 6.37 2.66 6.65 2.94L7.85 4.06C8.04 4.25 8.3 4.45 8.56 4.45H13A1.5 1.5 0 0 1 14.5 5.95V6.6" stroke="#6c707e" stroke-linecap="round"/><path d="M12.79 8.59L11.21 8.59L11.06 9.42Q10.73 9.79 10.23 9.89L9.44 9.61L8.65 10.98L9.29 11.52Q9.45 12.00 9.29 12.48L8.65 13.02L9.44 14.39L10.23 14.11Q10.72 14.21 11.06 14.58L11.21 15.41L12.79 15.41L12.94 14.58Q13.28 14.21 13.77 14.11L14.56 14.39L15.35 13.02L14.71 12.48Q14.55 12.00 14.71 11.52L15.35 10.98L14.56 9.61L13.77 9.89Q13.27 9.79 12.94 9.42Z" stroke="#3574f0" stroke-width="1" stroke-linejoin="round" fill="#e7effd"/><circle cx="12" cy="12" r=".9" fill="#3574f0"/></svg><span class="t " style="left:180px;top:259px;height:48px;line-height:48px;letter-spacing:0.491px;">android</span>
<svg style="position:absolute;left:105.5px;top:320px" width="20" height="20" viewBox="-10 -10 20 20" fill="none"><path d="M-3.6 -7L3.4 0L-3.6 7" stroke="#818594" stroke-width="2" stroke-linecap="round" stroke-linejoin="round"/></svg><svg style="position:absolute;left:142px;top:314px" width="32" height="32" viewBox="0 0 16 16" fill="none" ><path d="M1.5 4A1.5 1.5 0 0 1 3 2.5H5.6C6 2.5 6.37 2.66 6.65 2.94L7.85 4.06C8.04 4.25 8.3 4.45 8.56 4.45H13A1.5 1.5 0 0 1 14.5 5.95V12A1.5 1.5 0 0 1 13 13.5H3A1.5 1.5 0 0 1 1.5 12Z" fill="#ebecf0"/><circle cx="12" cy="12" r="5.4" fill="#f7f8fa"/><path d="M6.7 13.5H3A1.5 1.5 0 0 1 1.5 12V4A1.5 1.5 0 0 1 3 2.5H5.6C6 2.5 6.37 2.66 6.65 2.94L7.85 4.06C8.04 4.25 8.3 4.45 8.56 4.45H13A1.5 1.5 0 0 1 14.5 5.95V6.6" stroke="#6c707e" stroke-linecap="round"/><path d="M12.79 8.59L11.21 8.59L11.06 9.42Q10.73 9.79 10.23 9.89L9.44 9.61L8.65 10.98L9.29 11.52Q9.45 12.00 9.29 12.48L8.65 13.02L9.44 14.39L10.23 14.11Q10.72 14.21 11.06 14.58L11.21 15.41L12.79 15.41L12.94 14.58Q13.28 14.21 13.77 14.11L14.56 14.39L15.35 13.02L14.71 12.48Q14.55 12.00 14.71 11.52L15.35 10.98L14.56 9.61L13.77 9.89Q13.27 9.79 12.94 9.42Z" stroke="#3574f0" stroke-width="1" stroke-linejoin="round" fill="#e7effd"/><circle cx="12" cy="12" r=".9" fill="#3574f0"/></svg><span class="t " style="left:180px;top:307px;height:48px;line-height:48px;letter-spacing:0.493px;">build</span>
<svg style="position:absolute;left:105.5px;top:368px" width="20" height="20" viewBox="-10 -10 20 20" fill="none"><path d="M-3.6 -7L3.4 0L-3.6 7" stroke="#818594" stroke-width="2" stroke-linecap="round" stroke-linejoin="round"/></svg><svg style="position:absolute;left:142px;top:362px" width="32" height="32" viewBox="0 0 16 16" fill="none" ><path d="M1.5 4A1.5 1.5 0 0 1 3 2.5H5.6C6 2.5 6.37 2.66 6.65 2.94L7.85 4.06C8.04 4.25 8.3 4.45 8.56 4.45H13A1.5 1.5 0 0 1 14.5 5.95V12A1.5 1.5 0 0 1 13 13.5H3A1.5 1.5 0 0 1 1.5 12Z" fill="#ebecf0"/><circle cx="12" cy="12" r="5.4" fill="#f7f8fa"/><path d="M6.7 13.5H3A1.5 1.5 0 0 1 1.5 12V4A1.5 1.5 0 0 1 3 2.5H5.6C6 2.5 6.37 2.66 6.65 2.94L7.85 4.06C8.04 4.25 8.3 4.45 8.56 4.45H13A1.5 1.5 0 0 1 14.5 5.95V6.6" stroke="#6c707e" stroke-linecap="round"/><path d="M12.79 8.59L11.21 8.59L11.06 9.42Q10.73 9.79 10.23 9.89L9.44 9.61L8.65 10.98L9.29 11.52Q9.45 12.00 9.29 12.48L8.65 13.02L9.44 14.39L10.23 14.11Q10.72 14.21 11.06 14.58L11.21 15.41L12.79 15.41L12.94 14.58Q13.28 14.21 13.77 14.11L14.56 14.39L15.35 13.02L14.71 12.48Q14.55 12.00 14.71 11.52L15.35 10.98L14.56 9.61L13.77 9.89Q13.27 9.79 12.94 9.42Z" stroke="#3574f0" stroke-width="1" stroke-linejoin="round" fill="#e7effd"/><circle cx="12" cy="12" r=".9" fill="#3574f0"/></svg><span class="t " style="left:180px;top:355px;height:48px;line-height:48px;letter-spacing:0.517px;">build setup</span>
<svg style="position:absolute;left:105.5px;top:416px" width="20" height="20" viewBox="-10 -10 20 20" fill="none"><path d="M-3.6 -7L3.4 0L-3.6 7" stroke="#818594" stroke-width="2" stroke-linecap="round" stroke-linejoin="round"/></svg><svg style="position:absolute;left:142px;top:410px" width="32" height="32" viewBox="0 0 16 16" fill="none" ><path d="M1.5 4A1.5 1.5 0 0 1 3 2.5H5.6C6 2.5 6.37 2.66 6.65 2.94L7.85 4.06C8.04 4.25 8.3 4.45 8.56 4.45H13A1.5 1.5 0 0 1 14.5 5.95V12A1.5 1.5 0 0 1 13 13.5H3A1.5 1.5 0 0 1 1.5 12Z" fill="#ebecf0"/><circle cx="12" cy="12" r="5.4" fill="#f7f8fa"/><path d="M6.7 13.5H3A1.5 1.5 0 0 1 1.5 12V4A1.5 1.5 0 0 1 3 2.5H5.6C6 2.5 6.37 2.66 6.65 2.94L7.85 4.06C8.04 4.25 8.3 4.45 8.56 4.45H13A1.5 1.5 0 0 1 14.5 5.95V6.6" stroke="#6c707e" stroke-linecap="round"/><path d="M12.79 8.59L11.21 8.59L11.06 9.42Q10.73 9.79 10.23 9.89L9.44 9.61L8.65 10.98L9.29 11.52Q9.45 12.00 9.29 12.48L8.65 13.02L9.44 14.39L10.23 14.11Q10.72 14.21 11.06 14.58L11.21 15.41L12.79 15.41L12.94 14.58Q13.28 14.21 13.77 14.11L14.56 14.39L15.35 13.02L14.71 12.48Q14.55 12.00 14.71 11.52L15.35 10.98L14.56 9.61L13.77 9.89Q13.27 9.79 12.94 9.42Z" stroke="#3574f0" stroke-width="1" stroke-linejoin="round" fill="#e7effd"/><circle cx="12" cy="12" r=".9" fill="#3574f0"/></svg><span class="t " style="left:180px;top:403px;height:48px;line-height:48px;letter-spacing:0.490px;">help</span>
<svg style="position:absolute;left:105.5px;top:464px" width="20" height="20" viewBox="-10 -10 20 20" fill="none"><path d="M-3.6 -7L3.4 0L-3.6 7" stroke="#818594" stroke-width="2" stroke-linecap="round" stroke-linejoin="round"/></svg><svg style="position:absolute;left:142px;top:458px" width="32" height="32" viewBox="0 0 16 16" fill="none" ><path d="M1.5 4A1.5 1.5 0 0 1 3 2.5H5.6C6 2.5 6.37 2.66 6.65 2.94L7.85 4.06C8.04 4.25 8.3 4.45 8.56 4.45H13A1.5 1.5 0 0 1 14.5 5.95V12A1.5 1.5 0 0 1 13 13.5H3A1.5 1.5 0 0 1 1.5 12Z" fill="#ebecf0"/><circle cx="12" cy="12" r="5.4" fill="#f7f8fa"/><path d="M6.7 13.5H3A1.5 1.5 0 0 1 1.5 12V4A1.5 1.5 0 0 1 3 2.5H5.6C6 2.5 6.37 2.66 6.65 2.94L7.85 4.06C8.04 4.25 8.3 4.45 8.56 4.45H13A1.5 1.5 0 0 1 14.5 5.95V6.6" stroke="#6c707e" stroke-linecap="round"/><path d="M12.79 8.59L11.21 8.59L11.06 9.42Q10.73 9.79 10.23 9.89L9.44 9.61L8.65 10.98L9.29 11.52Q9.45 12.00 9.29 12.48L8.65 13.02L9.44 14.39L10.23 14.11Q10.72 14.21 11.06 14.58L11.21 15.41L12.79 15.41L12.94 14.58Q13.28 14.21 13.77 14.11L14.56 14.39L15.35 13.02L14.71 12.48Q14.55 12.00 14.71 11.52L15.35 10.98L14.56 9.61L13.77 9.89Q13.27 9.79 12.94 9.42Z" stroke="#3574f0" stroke-width="1" stroke-linejoin="round" fill="#e7effd"/><circle cx="12" cy="12" r=".9" fill="#3574f0"/></svg><span class="t " style="left:180px;top:451px;height:48px;line-height:48px;letter-spacing:0.743px;">ide</span>
<svg style="position:absolute;left:105.5px;top:512px" width="20" height="20" viewBox="-10 -10 20 20" fill="none"><path d="M-3.6 -7L3.4 0L-3.6 7" stroke="#818594" stroke-width="2" stroke-linecap="round" stroke-linejoin="round"/></svg><svg style="position:absolute;left:142px;top:506px" width="32" height="32" viewBox="0 0 16 16" fill="none" ><path d="M1.5 4A1.5 1.5 0 0 1 3 2.5H5.6C6 2.5 6.37 2.66 6.65 2.94L7.85 4.06C8.04 4.25 8.3 4.45 8.56 4.45H13A1.5 1.5 0 0 1 14.5 5.95V12A1.5 1.5 0 0 1 13 13.5H3A1.5 1.5 0 0 1 1.5 12Z" fill="#ebecf0"/><circle cx="12" cy="12" r="5.4" fill="#f7f8fa"/><path d="M6.7 13.5H3A1.5 1.5 0 0 1 1.5 12V4A1.5 1.5 0 0 1 3 2.5H5.6C6 2.5 6.37 2.66 6.65 2.94L7.85 4.06C8.04 4.25 8.3 4.45 8.56 4.45H13A1.5 1.5 0 0 1 14.5 5.95V6.6" stroke="#6c707e" stroke-linecap="round"/><path d="M12.79 8.59L11.21 8.59L11.06 9.42Q10.73 9.79 10.23 9.89L9.44 9.61L8.65 10.98L9.29 11.52Q9.45 12.00 9.29 12.48L8.65 13.02L9.44 14.39L10.23 14.11Q10.72 14.21 11.06 14.58L11.21 15.41L12.79 15.41L12.94 14.58Q13.28 14.21 13.77 14.11L14.56 14.39L15.35 13.02L14.71 12.48Q14.55 12.00 14.71 11.52L15.35 10.98L14.56 9.61L13.77 9.89Q13.27 9.79 12.94 9.42Z" stroke="#3574f0" stroke-width="1" stroke-linejoin="round" fill="#e7effd"/><circle cx="12" cy="12" r=".9" fill="#3574f0"/></svg><span class="t " style="left:180px;top:499px;height:48px;line-height:48px;letter-spacing:0.412px;">install</span>
<svg style="position:absolute;left:105.5px;top:560px" width="20" height="20" viewBox="-10 -10 20 20" fill="none"><path d="M-3.6 -7L3.4 0L-3.6 7" stroke="#818594" stroke-width="2" stroke-linecap="round" stroke-linejoin="round"/></svg><svg style="position:absolute;left:142px;top:554px" width="32" height="32" viewBox="0 0 16 16" fill="none" ><path d="M1.5 4A1.5 1.5 0 0 1 3 2.5H5.6C6 2.5 6.37 2.66 6.65 2.94L7.85 4.06C8.04 4.25 8.3 4.45 8.56 4.45H13A1.5 1.5 0 0 1 14.5 5.95V12A1.5 1.5 0 0 1 13 13.5H3A1.5 1.5 0 0 1 1.5 12Z" fill="#ebecf0"/><circle cx="12" cy="12" r="5.4" fill="#f7f8fa"/><path d="M6.7 13.5H3A1.5 1.5 0 0 1 1.5 12V4A1.5 1.5 0 0 1 3 2.5H5.6C6 2.5 6.37 2.66 6.65 2.94L7.85 4.06C8.04 4.25 8.3 4.45 8.56 4.45H13A1.5 1.5 0 0 1 14.5 5.95V6.6" stroke="#6c707e" stroke-linecap="round"/><path d="M12.79 8.59L11.21 8.59L11.06 9.42Q10.73 9.79 10.23 9.89L9.44 9.61L8.65 10.98L9.29 11.52Q9.45 12.00 9.29 12.48L8.65 13.02L9.44 14.39L10.23 14.11Q10.72 14.21 11.06 14.58L11.21 15.41L12.79 15.41L12.94 14.58Q13.28 14.21 13.77 14.11L14.56 14.39L15.35 13.02L14.71 12.48Q14.55 12.00 14.71 11.52L15.35 10.98L14.56 9.61L13.77 9.89Q13.27 9.79 12.94 9.42Z" stroke="#3574f0" stroke-width="1" stroke-linejoin="round" fill="#e7effd"/><circle cx="12" cy="12" r=".9" fill="#3574f0"/></svg><span class="t " style="left:180px;top:547px;height:48px;line-height:48px;letter-spacing:0.743px;">interop</span>
<svg style="position:absolute;left:105.5px;top:608px" width="20" height="20" viewBox="-10 -10 20 20" fill="none"><path d="M-3.6 -7L3.4 0L-3.6 7" stroke="#818594" stroke-width="2" stroke-linecap="round" stroke-linejoin="round"/></svg><svg style="position:absolute;left:142px;top:602px" width="32" height="32" viewBox="0 0 16 16" fill="none" ><path d="M1.5 4A1.5 1.5 0 0 1 3 2.5H5.6C6 2.5 6.37 2.66 6.65 2.94L7.85 4.06C8.04 4.25 8.3 4.45 8.56 4.45H13A1.5 1.5 0 0 1 14.5 5.95V12A1.5 1.5 0 0 1 13 13.5H3A1.5 1.5 0 0 1 1.5 12Z" fill="#ebecf0"/><circle cx="12" cy="12" r="5.4" fill="#f7f8fa"/><path d="M6.7 13.5H3A1.5 1.5 0 0 1 1.5 12V4A1.5 1.5 0 0 1 3 2.5H5.6C6 2.5 6.37 2.66 6.65 2.94L7.85 4.06C8.04 4.25 8.3 4.45 8.56 4.45H13A1.5 1.5 0 0 1 14.5 5.95V6.6" stroke="#6c707e" stroke-linecap="round"/><path d="M12.79 8.59L11.21 8.59L11.06 9.42Q10.73 9.79 10.23 9.89L9.44 9.61L8.65 10.98L9.29 11.52Q9.45 12.00 9.29 12.48L8.65 13.02L9.44 14.39L10.23 14.11Q10.72 14.21 11.06 14.58L11.21 15.41L12.79 15.41L12.94 14.58Q13.28 14.21 13.77 14.11L14.56 14.39L15.35 13.02L14.71 12.48Q14.55 12.00 14.71 11.52L15.35 10.98L14.56 9.61L13.77 9.89Q13.27 9.79 12.94 9.42Z" stroke="#3574f0" stroke-width="1" stroke-linejoin="round" fill="#e7effd"/><circle cx="12" cy="12" r=".9" fill="#3574f0"/></svg><span class="t " style="left:180px;top:595px;height:48px;line-height:48px;letter-spacing:0.763px;">other</span>
<svg style="position:absolute;left:106px;top:656px" width="20" height="20" viewBox="-10 -10 20 20" fill="none"><path d="M-7 -3.4L0 3.6L7 -3.4" stroke="#818594" stroke-width="2" stroke-linecap="round" stroke-linejoin="round"/></svg><svg style="position:absolute;left:142px;top:650px" width="32" height="32" viewBox="0 0 16 16" fill="none" ><path d="M1.5 4A1.5 1.5 0 0 1 3 2.5H5.6C6 2.5 6.37 2.66 6.65 2.94L7.85 4.06C8.04 4.25 8.3 4.45 8.56 4.45H13A1.5 1.5 0 0 1 14.5 5.95V12A1.5 1.5 0 0 1 13 13.5H3A1.5 1.5 0 0 1 1.5 12Z" fill="#ebecf0"/><circle cx="12" cy="12" r="5.4" fill="#f7f8fa"/><path d="M6.7 13.5H3A1.5 1.5 0 0 1 1.5 12V4A1.5 1.5 0 0 1 3 2.5H5.6C6 2.5 6.37 2.66 6.65 2.94L7.85 4.06C8.04 4.25 8.3 4.45 8.56 4.45H13A1.5 1.5 0 0 1 14.5 5.95V6.6" stroke="#6c707e" stroke-linecap="round"/><path d="M12.79 8.59L11.21 8.59L11.06 9.42Q10.73 9.79 10.23 9.89L9.44 9.61L8.65 10.98L9.29 11.52Q9.45 12.00 9.29 12.48L8.65 13.02L9.44 14.39L10.23 14.11Q10.72 14.21 11.06 14.58L11.21 15.41L12.79 15.41L12.94 14.58Q13.28 14.21 13.77 14.11L14.56 14.39L15.35 13.02L14.71 12.48Q14.55 12.00 14.71 11.52L15.35 10.98L14.56 9.61L13.77 9.89Q13.27 9.79 12.94 9.42Z" stroke="#3574f0" stroke-width="1" stroke-linejoin="round" fill="#e7effd"/><circle cx="12" cy="12" r=".9" fill="#3574f0"/></svg><span class="t " style="left:180px;top:643px;height:48px;line-height:48px;letter-spacing:0.597px;">verification</span>
<svg style="position:absolute;left:180px;top:698px" width="32" height="32" viewBox="0 0 16 16" fill="none" ><path d="M9.35 1.64L6.65 1.64L6.15 2.93Q5.38 3.45 4.53 3.86L3.17 3.65L1.82 5.99L2.68 7.06Q2.75 8.00 2.68 8.94L1.82 10.01L3.17 12.35L4.53 12.14Q5.37 12.55 6.15 13.07L6.65 14.36L9.35 14.36L9.85 13.07Q10.62 12.55 11.47 12.14L12.83 12.35L14.18 10.01L13.32 8.94Q13.25 8.00 13.32 7.06L14.18 5.99L12.83 3.65L11.47 3.86Q10.62 3.45 9.85 2.93Z" stroke="#6c707e" stroke-linejoin="round" fill="none"/><circle cx="8" cy="8" r="2.2" stroke="#6c707e" fill="none"/></svg><span class="t " style="left:218px;top:691px;height:48px;line-height:48px;letter-spacing:0.710px;">allTests</span>
<svg style="position:absolute;left:180px;top:746px" width="32" height="32" viewBox="0 0 16 16" fill="none" ><path d="M9.35 1.64L6.65 1.64L6.15 2.93Q5.38 3.45 4.53 3.86L3.17 3.65L1.82 5.99L2.68 7.06Q2.75 8.00 2.68 8.94L1.82 10.01L3.17 12.35L4.53 12.14Q5.37 12.55 6.15 13.07L6.65 14.36L9.35 14.36L9.85 13.07Q10.62 12.55 11.47 12.14L12.83 12.35L14.18 10.01L13.32 8.94Q13.25 8.00 13.32 7.06L14.18 5.99L12.83 3.65L11.47 3.86Q10.62 3.45 9.85 2.93Z" stroke="#6c707e" stroke-linejoin="round" fill="none"/><circle cx="8" cy="8" r="2.2" stroke="#6c707e" fill="none"/></svg><span class="t " style="left:218px;top:739px;height:48px;line-height:48px;letter-spacing:0.367px;">check</span>
<svg style="position:absolute;left:180px;top:794px" width="32" height="32" viewBox="0 0 16 16" fill="none" ><path d="M9.35 1.64L6.65 1.64L6.15 2.93Q5.38 3.45 4.53 3.86L3.17 3.65L1.82 5.99L2.68 7.06Q2.75 8.00 2.68 8.94L1.82 10.01L3.17 12.35L4.53 12.14Q5.37 12.55 6.15 13.07L6.65 14.36L9.35 14.36L9.85 13.07Q10.62 12.55 11.47 12.14L12.83 12.35L14.18 10.01L13.32 8.94Q13.25 8.00 13.32 7.06L14.18 5.99L12.83 3.65L11.47 3.86Q10.62 3.45 9.85 2.93Z" stroke="#6c707e" stroke-linejoin="round" fill="none"/><circle cx="8" cy="8" r="2.2" stroke="#6c707e" fill="none"/></svg><span class="t " style="left:218px;top:787px;height:48px;line-height:48px;letter-spacing:0.695px;">checkJetifier</span>
<svg style="position:absolute;left:180px;top:842px" width="32" height="32" viewBox="0 0 16 16" fill="none" ><path d="M9.35 1.64L6.65 1.64L6.15 2.93Q5.38 3.45 4.53 3.86L3.17 3.65L1.82 5.99L2.68 7.06Q2.75 8.00 2.68 8.94L1.82 10.01L3.17 12.35L4.53 12.14Q5.37 12.55 6.15 13.07L6.65 14.36L9.35 14.36L9.85 13.07Q10.62 12.55 11.47 12.14L12.83 12.35L14.18 10.01L13.32 8.94Q13.25 8.00 13.32 7.06L14.18 5.99L12.83 3.65L11.47 3.86Q10.62 3.45 9.85 2.93Z" stroke="#6c707e" stroke-linejoin="round" fill="none"/><circle cx="8" cy="8" r="2.2" stroke="#6c707e" fill="none"/></svg><span class="t " style="left:218px;top:835px;height:48px;line-height:48px;letter-spacing:0.250px;">checkKotlinGradlePluginConfiguration</span>
<svg style="position:absolute;left:180px;top:890px" width="32" height="32" viewBox="0 0 16 16" fill="none" ><path d="M9.35 1.64L6.65 1.64L6.15 2.93Q5.38 3.45 4.53 3.86L3.17 3.65L1.82 5.99L2.68 7.06Q2.75 8.00 2.68 8.94L1.82 10.01L3.17 12.35L4.53 12.14Q5.37 12.55 6.15 13.07L6.65 14.36L9.35 14.36L9.85 13.07Q10.62 12.55 11.47 12.14L12.83 12.35L14.18 10.01L13.32 8.94Q13.25 8.00 13.32 7.06L14.18 5.99L12.83 3.65L11.47 3.86Q10.62 3.45 9.85 2.93Z" stroke="#6c707e" stroke-linejoin="round" fill="none"/><circle cx="8" cy="8" r="2.2" stroke="#6c707e" fill="none"/></svg><span class="t " style="left:218px;top:883px;height:48px;line-height:48px;letter-spacing:0.728px;">connectedAndroidTest</span>
<svg style="position:absolute;left:180px;top:938px" width="32" height="32" viewBox="0 0 16 16" fill="none" ><path d="M9.35 1.64L6.65 1.64L6.15 2.93Q5.38 3.45 4.53 3.86L3.17 3.65L1.82 5.99L2.68 7.06Q2.75 8.00 2.68 8.94L1.82 10.01L3.17 12.35L4.53 12.14Q5.37 12.55 6.15 13.07L6.65 14.36L9.35 14.36L9.85 13.07Q10.62 12.55 11.47 12.14L12.83 12.35L14.18 10.01L13.32 8.94Q13.25 8.00 13.32 7.06L14.18 5.99L12.83 3.65L11.47 3.86Q10.62 3.45 9.85 2.93Z" stroke="#6c707e" stroke-linejoin="round" fill="none"/><circle cx="8" cy="8" r="2.2" stroke="#6c707e" fill="none"/></svg><span class="t " style="left:218px;top:931px;height:48px;line-height:48px;letter-spacing:0.482px;">connectedCheck</span>
<svg style="position:absolute;left:180px;top:986px" width="32" height="32" viewBox="0 0 16 16" fill="none" ><path d="M9.35 1.64L6.65 1.64L6.15 2.93Q5.38 3.45 4.53 3.86L3.17 3.65L1.82 5.99L2.68 7.06Q2.75 8.00 2.68 8.94L1.82 10.01L3.17 12.35L4.53 12.14Q5.37 12.55 6.15 13.07L6.65 14.36L9.35 14.36L9.85 13.07Q10.62 12.55 11.47 12.14L12.83 12.35L14.18 10.01L13.32 8.94Q13.25 8.00 13.32 7.06L14.18 5.99L12.83 3.65L11.47 3.86Q10.62 3.45 9.85 2.93Z" stroke="#6c707e" stroke-linejoin="round" fill="none"/><circle cx="8" cy="8" r="2.2" stroke="#6c707e" fill="none"/></svg><span class="t " style="left:218px;top:979px;height:48px;line-height:48px;letter-spacing:0.636px;">connectedDebugAndroidTest</span>
<svg style="position:absolute;left:180px;top:1034px" width="32" height="32" viewBox="0 0 16 16" fill="none" ><path d="M9.35 1.64L6.65 1.64L6.15 2.93Q5.38 3.45 4.53 3.86L3.17 3.65L1.82 5.99L2.68 7.06Q2.75 8.00 2.68 8.94L1.82 10.01L3.17 12.35L4.53 12.14Q5.37 12.55 6.15 13.07L6.65 14.36L9.35 14.36L9.85 13.07Q10.62 12.55 11.47 12.14L12.83 12.35L14.18 10.01L13.32 8.94Q13.25 8.00 13.32 7.06L14.18 5.99L12.83 3.65L11.47 3.86Q10.62 3.45 9.85 2.93Z" stroke="#6c707e" stroke-linejoin="round" fill="none"/><circle cx="8" cy="8" r="2.2" stroke="#6c707e" fill="none"/></svg><span class="t " style="left:218px;top:1027px;height:48px;line-height:48px;letter-spacing:0.698px;">deviceAndroidTest</span>
<svg style="position:absolute;left:180px;top:1082px" width="32" height="32" viewBox="0 0 16 16" fill="none" ><path d="M9.35 1.64L6.65 1.64L6.15 2.93Q5.38 3.45 4.53 3.86L3.17 3.65L1.82 5.99L2.68 7.06Q2.75 8.00 2.68 8.94L1.82 10.01L3.17 12.35L4.53 12.14Q5.37 12.55 6.15 13.07L6.65 14.36L9.35 14.36L9.85 13.07Q10.62 12.55 11.47 12.14L12.83 12.35L14.18 10.01L13.32 8.94Q13.25 8.00 13.32 7.06L14.18 5.99L12.83 3.65L11.47 3.86Q10.62 3.45 9.85 2.93Z" stroke="#6c707e" stroke-linejoin="round" fill="none"/><circle cx="8" cy="8" r="2.2" stroke="#6c707e" fill="none"/></svg><span class="t " style="left:218px;top:1075px;height:48px;line-height:48px;letter-spacing:0.362px;">deviceCheck</span>
<svg style="position:absolute;left:180px;top:1130px" width="32" height="32" viewBox="0 0 16 16" fill="none" ><path d="M9.35 1.64L6.65 1.64L6.15 2.93Q5.38 3.45 4.53 3.86L3.17 3.65L1.82 5.99L2.68 7.06Q2.75 8.00 2.68 8.94L1.82 10.01L3.17 12.35L4.53 12.14Q5.37 12.55 6.15 13.07L6.65 14.36L9.35 14.36L9.85 13.07Q10.62 12.55 11.47 12.14L12.83 12.35L14.18 10.01L13.32 8.94Q13.25 8.00 13.32 7.06L14.18 5.99L12.83 3.65L11.47 3.86Q10.62 3.45 9.85 2.93Z" stroke="#6c707e" stroke-linejoin="round" fill="none"/><circle cx="8" cy="8" r="2.2" stroke="#6c707e" fill="none"/></svg><span class="t " style="left:218px;top:1123px;height:48px;line-height:48px;letter-spacing:0.505px;">iosSimulatorArm64Test</span>
<svg style="position:absolute;left:180px;top:1178px" width="32" height="32" viewBox="0 0 16 16" fill="none" ><path d="M9.35 1.64L6.65 1.64L6.15 2.93Q5.38 3.45 4.53 3.86L3.17 3.65L1.82 5.99L2.68 7.06Q2.75 8.00 2.68 8.94L1.82 10.01L3.17 12.35L4.53 12.14Q5.37 12.55 6.15 13.07L6.65 14.36L9.35 14.36L9.85 13.07Q10.62 12.55 11.47 12.14L12.83 12.35L14.18 10.01L13.32 8.94Q13.25 8.00 13.32 7.06L14.18 5.99L12.83 3.65L11.47 3.86Q10.62 3.45 9.85 2.93Z" stroke="#6c707e" stroke-linejoin="round" fill="none"/><circle cx="8" cy="8" r="2.2" stroke="#6c707e" fill="none"/></svg><span class="t " style="left:218px;top:1171px;height:48px;line-height:48px;letter-spacing:0.736px;">iosX64Test</span>
<svg style="position:absolute;left:180px;top:1226px" width="32" height="32" viewBox="0 0 16 16" fill="none" ><path d="M9.35 1.64L6.65 1.64L6.15 2.93Q5.38 3.45 4.53 3.86L3.17 3.65L1.82 5.99L2.68 7.06Q2.75 8.00 2.68 8.94L1.82 10.01L3.17 12.35L4.53 12.14Q5.37 12.55 6.15 13.07L6.65 14.36L9.35 14.36L9.85 13.07Q10.62 12.55 11.47 12.14L12.83 12.35L14.18 10.01L13.32 8.94Q13.25 8.00 13.32 7.06L14.18 5.99L12.83 3.65L11.47 3.86Q10.62 3.45 9.85 2.93Z" stroke="#6c707e" stroke-linejoin="round" fill="none"/><circle cx="8" cy="8" r="2.2" stroke="#6c707e" fill="none"/></svg><span class="t " style="left:218px;top:1219px;height:48px;line-height:48px;letter-spacing:0.429px;">lint</span>
<svg style="position:absolute;left:180px;top:1274px" width="32" height="32" viewBox="0 0 16 16" fill="none" ><path d="M9.35 1.64L6.65 1.64L6.15 2.93Q5.38 3.45 4.53 3.86L3.17 3.65L1.82 5.99L2.68 7.06Q2.75 8.00 2.68 8.94L1.82 10.01L3.17 12.35L4.53 12.14Q5.37 12.55 6.15 13.07L6.65 14.36L9.35 14.36L9.85 13.07Q10.62 12.55 11.47 12.14L12.83 12.35L14.18 10.01L13.32 8.94Q13.25 8.00 13.32 7.06L14.18 5.99L12.83 3.65L11.47 3.86Q10.62 3.45 9.85 2.93Z" stroke="#6c707e" stroke-linejoin="round" fill="none"/><circle cx="8" cy="8" r="2.2" stroke="#6c707e" fill="none"/></svg><span class="t " style="left:218px;top:1267px;height:48px;line-height:48px;letter-spacing:0.467px;">lintDebug</span>
<svg style="position:absolute;left:180px;top:1322px" width="32" height="32" viewBox="0 0 16 16" fill="none" ><path d="M9.35 1.64L6.65 1.64L6.15 2.93Q5.38 3.45 4.53 3.86L3.17 3.65L1.82 5.99L2.68 7.06Q2.75 8.00 2.68 8.94L1.82 10.01L3.17 12.35L4.53 12.14Q5.37 12.55 6.15 13.07L6.65 14.36L9.35 14.36L9.85 13.07Q10.62 12.55 11.47 12.14L12.83 12.35L14.18 10.01L13.32 8.94Q13.25 8.00 13.32 7.06L14.18 5.99L12.83 3.65L11.47 3.86Q10.62 3.45 9.85 2.93Z" stroke="#6c707e" stroke-linejoin="round" fill="none"/><circle cx="8" cy="8" r="2.2" stroke="#6c707e" fill="none"/></svg><span class="t " style="left:218px;top:1315px;height:48px;line-height:48px;letter-spacing:0.099px;">lintFix</span>
<svg style="position:absolute;left:180px;top:1370px" width="32" height="32" viewBox="0 0 16 16" fill="none" ><path d="M9.35 1.64L6.65 1.64L6.15 2.93Q5.38 3.45 4.53 3.86L3.17 3.65L1.82 5.99L2.68 7.06Q2.75 8.00 2.68 8.94L1.82 10.01L3.17 12.35L4.53 12.14Q5.37 12.55 6.15 13.07L6.65 14.36L9.35 14.36L9.85 13.07Q10.62 12.55 11.47 12.14L12.83 12.35L14.18 10.01L13.32 8.94Q13.25 8.00 13.32 7.06L14.18 5.99L12.83 3.65L11.47 3.86Q10.62 3.45 9.85 2.93Z" stroke="#6c707e" stroke-linejoin="round" fill="none"/><circle cx="8" cy="8" r="2.2" stroke="#6c707e" fill="none"/></svg><span class="t " style="left:218px;top:1363px;height:48px;line-height:48px;letter-spacing:-0.016px;">lintRelease</span>
<svg style="position:absolute;left:180px;top:1418px" width="32" height="32" viewBox="0 0 16 16" fill="none" ><path d="M9.35 1.64L6.65 1.64L6.15 2.93Q5.38 3.45 4.53 3.86L3.17 3.65L1.82 5.99L2.68 7.06Q2.75 8.00 2.68 8.94L1.82 10.01L3.17 12.35L4.53 12.14Q5.37 12.55 6.15 13.07L6.65 14.36L9.35 14.36L9.85 13.07Q10.62 12.55 11.47 12.14L12.83 12.35L14.18 10.01L13.32 8.94Q13.25 8.00 13.32 7.06L14.18 5.99L12.83 3.65L11.47 3.86Q10.62 3.45 9.85 2.93Z" stroke="#6c707e" stroke-linejoin="round" fill="none"/><circle cx="8" cy="8" r="2.2" stroke="#6c707e" fill="none"/></svg><span class="t " style="left:218px;top:1411px;height:48px;line-height:48px;letter-spacing:0.094px;">lintVitalRelease</span>
</div>
<span class="t hdr" style="left:2104px;top:1px;height:84px;line-height:84px;letter-spacing:-0.404px;">Gradle</span>
<div class="abs" style="left:2620px;top:30px;width:4px;height:4px;border-radius:50%;background:#6c707e"></div><div class="abs" style="left:2620px;top:40px;width:4px;height:4px;border-radius:50%;background:#6c707e"></div><div class="abs" style="left:2620px;top:50px;width:4px;height:4px;border-radius:50%;background:#6c707e"></div>
<div class="abs" style="left:2661px;top:41px;width:26px;height:2px;background:#6c707e"></div>
<svg class="abs" style="left:2102px;top:100px" width="36" height="36" viewBox="-18 -18 36 36" fill="none" stroke-linecap="round" stroke-linejoin="round" stroke-width="1.8"><path d="M-10.8 2.5A10.8 10.8 0 0 1 7.5 -7.8M10.8 -2.5A10.8 10.8 0 0 1 -7.5 7.8" stroke="#6c707e"/><path d="M-15.5 -1.2L-10.9 3.6L-6 -0.6M6.5 1.2L11.4 -3.6L15.9 1.3" stroke="#6c707e"/></svg>
<svg class="abs" style="left:2153px;top:99px" width="36" height="36" viewBox="-18 -18 36 36" fill="none" stroke-linecap="butt" stroke-linejoin="round" stroke-width="1.8"><path d="M-12.8 0H12.8M0 -12.7V12.7" stroke="#6c707e"/></svg>
<svg class="abs" style="left:2205px;top:99px" width="36" height="36" viewBox="-18 -18 36 36" fill="none" stroke-linecap="butt" stroke-linejoin="round" stroke-width="1.8"><path d="M-12.9 0H12.9" stroke="#b9babd"/></svg>
<svg class="abs" style="left:2272px;top:100px" width="36" height="36" viewBox="-18 -18 36 36" fill="none" stroke-linecap="round" stroke-linejoin="round" stroke-width="1.8"><path d="M0 -11.9V5M-5.6 0L0 5.6L5.6 0" stroke="#6c707e"/><path d="M-11.5 4.3V11.5H11.5V4.3" stroke="#6c707e" stroke-linejoin="miter" stroke-linecap="butt"/></svg>
<svg class="abs" style="left:2324px;top:100px" width="36" height="36" viewBox="-18 -18 36 36" fill="none" stroke-linecap="round" stroke-linejoin="round" stroke-width="1.8"><rect x="-13" y="-11" width="26" height="22.1" rx="3.6" stroke="#6c707e"/><path d="M-13 -5.6H13" stroke="#6c707e"/><path d="M-7.4 -1.3V7.4L0.3 3Z" stroke="#6c707e"/></svg>
<svg class="abs" style="left:2390px;top:100px" width="36" height="36" viewBox="-18 -18 36 36" fill="none" stroke-linecap="round" stroke-linejoin="round" stroke-width="1.8"><path d="M-7.6 -4.1L0 -11.6L7.6 -4.1M-7.6 5L0 12.6L7.6 5" stroke="#6c707e"/></svg>
<svg class="abs" style="left:2442px;top:100px" width="36" height="36" viewBox="-18 -18 36 36" fill="none" stroke-linecap="round" stroke-linejoin="round" stroke-width="1.8"><path d="M-7.6 -11.5L0 -4L7.6 -11.5M-7.6 11.5L0 3.8L7.6 11.5" stroke="#6c707e"/></svg>
<svg class="abs" style="left:2496px;top:101.5px" width="36" height="36" viewBox="0 0 18 18" fill="none"><path d="M6.9 13.5H3A1.5 1.5 0 0 1 1.5 12V4A1.5 1.5 0 0 1 3 2.5H5.6C6 2.5 6.37 2.66 6.65 2.94L7.85 4.06C8.04 4.25 8.3 4.45 8.56 4.45H13A1.5 1.5 0 0 1 14.5 5.95V7.4H6.9Z" fill="#ebecf0"/><path d="M6.9 13.5H3A1.5 1.5 0 0 1 1.5 12V4A1.5 1.5 0 0 1 3 2.5H5.6C6 2.5 6.37 2.66 6.65 2.94L7.85 4.06C8.04 4.25 8.3 4.45 8.56 4.45H13A1.5 1.5 0 0 1 14.5 5.95V7.2" stroke="#6c707e" stroke-linecap="round"/><rect x="8.5" y="8.9" width="6.9" height="6.7" rx="1.5" fill="#e7effd" stroke="#3574f0"/><path d="M11.95 8.9V15.6M8.5 12.25H15.4" stroke="#3574f0"/></svg>
<svg class="abs" style="left:2559px;top:100px" width="36" height="36" viewBox="-18 -18 36 36" fill="none" stroke-linecap="round" stroke-linejoin="round" stroke-width="1.8"><path d="M-10.07 -1.2A9.2 9.2 0 1 1 -1.7 7.16M4.9 5.5L12.3 11.5" stroke="#6c707e"/><path d="M-12.3 4.5V13.6M-8 2.4V13.6M-3.8 7.4V13.6" stroke="#3574f0" stroke-width="2" stroke-linecap="butt"/></svg>
<svg class="abs" style="left:2612px;top:100px" width="36" height="36" viewBox="-18 -18 36 36" fill="none" stroke-linecap="round" stroke-linejoin="round" stroke-width="1.8"><path d="M-14 -11.2H14M-14 11.1H14" stroke="#6c707e" stroke-linecap="butt"/><path d="M-7.1 8V-6.9M-11.7 -2.3L-7.1 -6.9L-2.4 -2.3" stroke="#3574f0"/><path d="M2.3 -2.3L6.9 -6.9L11.6 -2.3" stroke="#3574f0"/><path d="M6.9 -6.9V8" stroke="#3574f0" stroke-dasharray="3.6 2.6" stroke-linecap="butt"/></svg>
<svg class="abs" style="left:2665.5px;top:100px" width="36" height="36" viewBox="-18 -18 36 36" fill="none" stroke-linecap="round" stroke-linejoin="round" stroke-width="1.8"><path d="M-4.1 -7.5L4 0L-4.1 7.7" stroke="#818594"/></svg>
<div class="abs" style="left:2256px;top:98.5px;width:2px;height:39px;background:#dadbe1"></div>
<div class="abs" style="left:2374px;top:98.5px;width:2px;height:39px;background:#dadbe1"></div>
<div class="abs" style="left:2544px;top:98.5px;width:2px;height:39px;background:#dadbe1"></div>
<div class="abs" style="left:2662px;top:98.5px;width:2px;height:39px;background:#dadbe1"></div>
<div class="abs" style="left:2719px;top:0;width:79px;height:1440px;background:#f7f8fa"></div>
<svg class="abs" style="left:2734px;top:16px" width="48" height="48" viewBox="-24 -24 48 48" fill="none" stroke="#6c707e" stroke-width="2.8" stroke-linecap="round" stroke-linejoin="round"><path d="M3.8 -14.6H-0.5A9.8 9.8 0 0 0 -10.3 -4.8V2.2L-14.9 11A1.1 1.1 0 0 0 -13.9 12.6H13.9A1.1 1.1 0 0 0 14.9 11L10.5 3V-1.3"/><path d="M-4.2 16.2H4.2A4.2 3.9 0 0 1 -4.2 16.2Z" fill="#6c707e" stroke="none"/><circle cx="13" cy="-11.1" r="7.1" fill="#588aee" stroke="none"/></svg>
<svg class="abs" style="left:2734px;top:98px" width="48" height="48" viewBox="-24 -24 48 48" fill="none" stroke="#6c707e" stroke-width="2.8" stroke-linecap="round" stroke-linejoin="round"><path d="M-13.10 -12.70C-11.20 -13.08 -5.43 -15.27 -1.70 -15.00C2.03 -14.73 6.62 -13.18 9.30 -11.10C11.98 -9.02 14.40 -5.25 14.40 -2.50C14.40 0.25 11.46 3.77 9.30 5.40C7.14 7.03 3.93 7.43 1.45 7.30C-1.03 7.17 -4.22 5.70 -5.60 4.60C-6.97 3.50 -7.07 1.82 -6.80 0.70C-6.53 -0.42 -5.13 -1.70 -4.00 -2.10C-2.87 -2.50 -0.78 -1.90 0.00 -1.70C0.78 -1.50 0.58 -1.03 0.70 -0.90"/><path d="M12.80 12.20C11.23 12.57 6.92 14.56 3.40 14.40C-0.12 14.24 -5.35 13.28 -8.35 11.25C-11.35 9.22 -14.14 5.01 -14.60 2.20C-15.06 -0.61 -13.12 -3.90 -11.10 -5.60C-9.08 -7.30 -5.18 -8.00 -2.50 -8.00C0.18 -8.00 3.50 -6.65 5.00 -5.60C6.50 -4.55 6.70 -2.81 6.50 -1.70C6.30 -0.59 4.83 0.59 3.80 1.05C2.77 1.51 0.88 1.05 0.30 1.05"/></svg>
<svg class="abs" style="left:2734px;top:178px" width="48" height="48" viewBox="-24 -24 48 48" fill="none" stroke="#6c707e" stroke-width="2.8" stroke-linecap="round" stroke-linejoin="round"><ellipse cx="0" cy="-11.3" rx="14.5" ry="5.2"/><path d="M-14.5 -11.3V11.1A14.5 5.2 0 0 0 14.5 11.1V-11.3"/><path d="M-14.5 -3.8A14.5 5.2 0 0 0 14.5 -3.8M-14.5 3.6A14.5 5.2 0 0 0 14.5 3.6"/></svg>
<div class="abs" style="left:2728px;top:252.3px;width:59.8px;height:60px;border-radius:11px;background:#3574f0"></div>
<svg class="abs" style="left:2738.1px;top:262.9px" width="40" height="40" viewBox="0 0 16 16" fill="none"><path d="M0.8 12.9C0.6 10 1.6 7.6 3.2 6.2C3 5 4.5 3.9 7 3.9C9.5 3.9 11 5.8 12.8 5.8C14.2 5.8 15.1 4.8 15.1 3.6C15.1 2.6 14.3 2 13.5 2C12.8 2 12.1 2.4 11.8 3M15.1 3.8C15.1 6.5 13.8 7.8 12.9 8.9C12 10 11.4 11 11.3 12.7M0.8 12.9C1.2 13.4 2.2 13.4 2.7 12.6C3.2 11.8 3.4 11.35 3.9 11.35C4.6 11.35 5 12 5.3 12.6C5.7 13.4 6.8 13.4 7.3 12.6C7.7 11.9 8 11.35 8.6 11.35C9.3 11.35 9.6 12 9.9 12.6C10.2 13.3 11 13.4 11.3 12.7M3.2 5.4C3.3 6.5 3.5 7.6 4 8.4C4.6 9.3 5.6 9.1 6.4 8.5L7.6 7.5" stroke="#fff" stroke-width="1.2" stroke-linecap="round" stroke-linejoin="round" fill="none"/><circle cx="9.9" cy="7.1" r=".65" fill="#fff"/></svg>
<svg class="abs" style="left:2734px;top:338px" width="48" height="48" viewBox="-24 -24 48 48" fill="none" stroke="#6c707e" stroke-width="2.8" stroke-linecap="round" stroke-linejoin="round"><circle cx="-1.75" cy="-1.25" r="12.9"/><path d="M8 8L17.5 17"/></svg>
<svg class="abs" style="left:2734px;top:418px" width="48" height="48" viewBox="-24 -24 48 48" fill="none" stroke="#6c707e" stroke-width="2.8" stroke-linecap="round" stroke-linejoin="round"><path d="M-8.75 8.5H-11.5A5.1 5.1 0 0 1 -16.6 3.4V-3.65A5.1 5.1 0 0 1 -11.5 -8.75H-9.9A1.15 1.15 0 0 0 -8.75 -9.9V-11.5A5.1 5.1 0 0 1 -3.65 -16.6H3.8A4.7 4.7 0 0 1 8.5 -11.9V-4A3.9 3.9 0 0 1 4.6 -0.1H-4A4.75 4.75 0 0 0 -8.75 4.65V11.45A5.1 5.1 0 0 0 -3.65 16.55H3.8A4.7 4.7 0 0 0 8.5 11.85V10.1A1.6 1.6 0 0 1 10.1 8.5H11.65A4.9 4.9 0 0 0 16.55 3.6V-3.85A4.9 4.9 0 0 0 11.65 -8.75H8.5"/><circle cx="0" cy="-10" r="2.3" fill="#6c707e" stroke="none"/><circle cx="0" cy="9.9" r="2.3" fill="#6c707e" stroke="none"/></svg>
<svg class="abs" style="left:2734px;top:497.5px" width="48" height="48" viewBox="-24 -24 48 48" fill="none" stroke="#6c707e" stroke-width="2.8" stroke-linecap="round" stroke-linejoin="round"><path d="M-8 -8.1H8V6.2A8 8 0 0 1 -8 6.2Z"/><path d="M-5.5 -8.1A5.5 5.9 0 0 1 5.5 -8.1"/><path d="M-9.5 -3.5L-15.7 -7.1M9.5 -3.5L15.7 -7.1M-9.5 2.5H-17.7M9.5 2.5H17.7M-9.5 9L-15.7 12.6M9.5 9L15.7 12.6"/></svg>
<svg class="abs" style="left:2734px;top:578px" width="48" height="48" viewBox="-24 -24 48 48" fill="none" stroke="#6c707e" stroke-width="2.8" stroke-linecap="round" stroke-linejoin="round"><path d="M-10.8 -17.1L-2.7 -8.5L12.9 -13.5L17.5 -9.5L3.8 -1.9L10.4 4.6H14.4L17.5 7.7L7.4 17.3L4.3 14.2V10.2L-1.7 3.6L-9.3 17.3L-13.8 12.7L-8.3 -2.9L-16.9 -11.5A4.3 4.3 0 0 1 -10.8 -17.1Z"/></svg>
<svg class="abs" style="left:2734px;top:658px" width="48" height="48" viewBox="-24 -24 48 48" fill="none" stroke="#6c707e" stroke-width="2.8" stroke-linecap="round" stroke-linejoin="round"><path d="M-8.3 14.5H-11.4A3 3 0 0 1 -14.4 11.5V-11.5A3 3 0 0 1 -11.4 -14.5H1.4A3 3 0 0 1 4.4 -11.5V1.8M-7.6 -8.6H-2.4"/><path d="M-5.2 15.8A11.3 8.5 0 0 1 17.4 15.8Z"/><path d="M-1.2 3.3L0.4 6.6M13.3 3.3L11.7 6.6"/></svg>
<div class="abs" style="left:2734px;top:732px;width:48px;height:2px;background:#c9ccd6"></div>
<svg class="abs" style="left:2734px;top:760px" width="48" height="48" viewBox="-24 -24 48 48" fill="none" stroke="#6c707e" stroke-width="2.8" stroke-linecap="round" stroke-linejoin="round"><path d="M-9.3 14.5H-11.4A3 3 0 0 1 -14.4 11.5V-11.5A3 3 0 0 1 -11.4 -14.5H1.4A3 3 0 0 1 4.4 -11.5V-3.3M-7.6 -8.6H-2.4"/><rect x="-4.5" y="1.5" width="19.2" height="8.8" rx="1.5"/><path d="M-5 16.4H15.3"/></svg>
<svg class="abs" style="left:2734px;top:840px" width="48" height="48" viewBox="-24 -24 48 48" fill="none" stroke="#6c707e" stroke-width="2.8" stroke-linecap="round" stroke-linejoin="round"><path d="M-0.9 14.5H-11.4A3 3 0 0 1 -14.4 11.5V-11.5A3 3 0 0 1 -11.4 -14.5H1.4A3 3 0 0 1 4.4 -11.5V-2.4M-7.6 -8.6H-2.4"/><circle cx="8.1" cy="8" r="6.6"/><path d="M12.9 12.8L18.3 18.2"/></svg>
<div class="abs" style="left:822px;top:0;width:2px;height:1440px;background:#ebecf0"></div>
<div class="abs" style="left:2078px;top:0;width:2px;height:1440px;background:#ebecf0"></div>
<div class="abs" style="left:2716px;top:0;width:2px;height:1440px;background:#ebecf0"></div>
<div class="abs" style="left:0;top:82px;width:2719px;height:2px;background:#ebecf0"></div>
<div class="abs" style="left:824px;top:76px;width:354px;height:8px;background:#a8adbd;border-radius:4px"></div>
<div class="abs" style="left:0;top:0;width:2798px;height:2px;background:#d1d1d1"></div>
<div class="abs" style="left:0;top:1438px;width:2798px;height:2px;background:#d1d1d1"></div>
<div class="abs" style="left:0;top:0;width:2px;height:1440px;background:#d1d1d1"></div>
<div class="abs" style="left:2796px;top:0;width:2px;height:1440px;background:#d1d1d1"></div>
</div></body></html>
